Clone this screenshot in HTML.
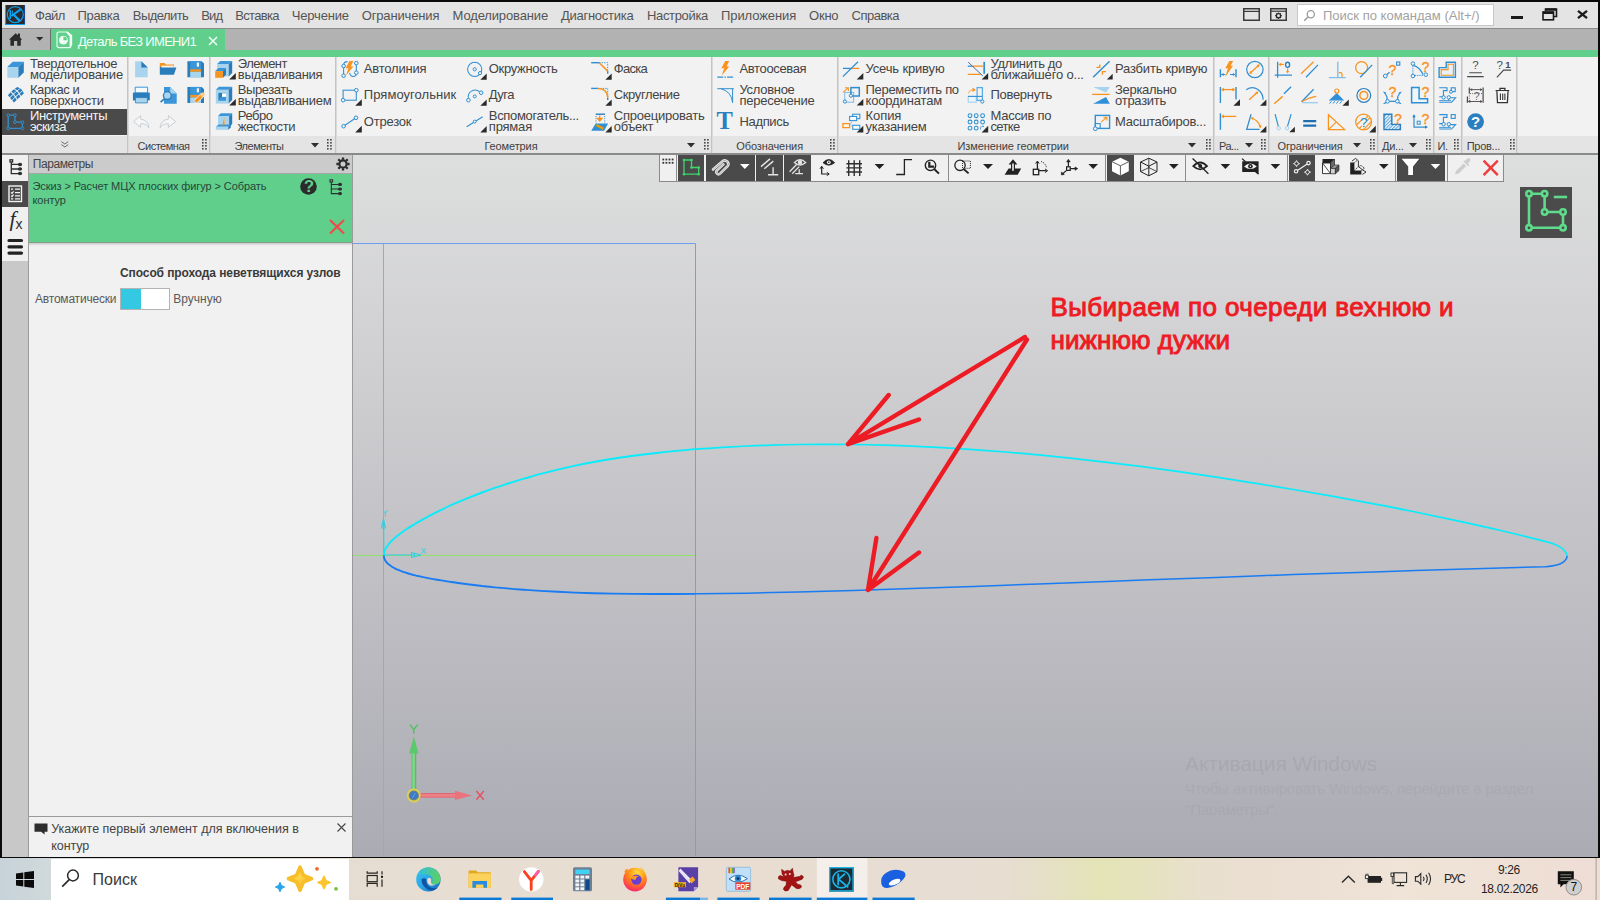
<!DOCTYPE html>
<html lang="ru"><head><meta charset="utf-8"><title>КОМПАС-3D</title><style>
html,body{margin:0;padding:0;width:1600px;height:900px;overflow:hidden;background:#f0f0f0;font-family:"Liberation Sans",sans-serif;}
.r{position:absolute;display:block;}
.t{position:absolute;white-space:pre;font-family:"Liberation Sans",sans-serif;}
svg{overflow:visible;}
</style></head><body>
<div class="r" style="left:0px;top:0px;width:1600px;height:858px;background:#0a0a0a;"></div>
<div class="r" style="left:2px;top:2px;width:1596px;height:26px;background:#e4e4e4;"></div>
<div class="r" style="left:2px;top:28px;width:1596px;height:1px;background:#8c8c8c;"></div>
<div class="r" style="left:2px;top:29px;width:1596px;height:21px;background:#b2b2b2;"></div>
<div class="r" style="left:2px;top:50px;width:1596px;height:6.5px;background:#5fcf8b;"></div>
<div class="r" style="left:51px;top:29px;width:174px;height:22px;background:#5fcf8b;"></div>
<svg class="r" style="left:5px;top:5px;" width="20" height="20" viewBox="0 0 20 20"><rect x="0" y="0" width="20" height="20" fill="#2c2a2a"/><path d="M0.5 0V19.5H20" fill="none" stroke="#0aa5f5" stroke-width="1.1"/><path d="M19.6 0V19" stroke="#1a4fb0" stroke-width="0.8"/><circle cx="10.3" cy="9.6" r="8" fill="none" stroke="#0a9fe8" stroke-width="1.2"/><path d="M5.3 5.2V13.8" stroke="#0aa5f5" stroke-width="1.5"/><path d="M6.4 11L15.6 4.4" stroke="#0aa5f5" stroke-width="2"/><path d="M9 10L15.3 16.4" stroke="#0aa5f5" stroke-width="2.3"/><path d="M7.6 5.6V10" stroke="#0aa5f5" stroke-width="0.9"/></svg>
<div class="t" style="left:35.1px;top:8.80px;font-size:13px;line-height:13px;color:#545454;letter-spacing:-0.592px;">Файл</div>
<div class="t" style="left:77.6px;top:8.80px;font-size:13px;line-height:13px;color:#545454;letter-spacing:-0.370px;">Правка</div>
<div class="t" style="left:132.8px;top:8.80px;font-size:13px;line-height:13px;color:#545454;letter-spacing:-0.561px;">Выделить</div>
<div class="t" style="left:201.3px;top:8.80px;font-size:13px;line-height:13px;color:#545454;letter-spacing:-0.844px;">Вид</div>
<div class="t" style="left:235.2px;top:8.80px;font-size:13px;line-height:13px;color:#545454;letter-spacing:-0.661px;">Вставка</div>
<div class="t" style="left:291.8px;top:8.80px;font-size:13px;line-height:13px;color:#545454;letter-spacing:-0.189px;">Черчение</div>
<div class="t" style="left:361.7px;top:8.80px;font-size:13px;line-height:13px;color:#545454;letter-spacing:-0.150px;">Ограничения</div>
<div class="t" style="left:452.6px;top:8.80px;font-size:13px;line-height:13px;color:#545454;letter-spacing:-0.145px;">Моделирование</div>
<div class="t" style="left:560.9px;top:8.80px;font-size:13px;line-height:13px;color:#545454;letter-spacing:-0.252px;">Диагностика</div>
<div class="t" style="left:647.0px;top:8.80px;font-size:13px;line-height:13px;color:#545454;letter-spacing:-0.344px;">Настройка</div>
<div class="t" style="left:721.1px;top:8.80px;font-size:13px;line-height:13px;color:#545454;letter-spacing:-0.106px;">Приложения</div>
<div class="t" style="left:809.0px;top:8.80px;font-size:13px;line-height:13px;color:#545454;letter-spacing:-0.205px;">Окно</div>
<div class="t" style="left:851.6px;top:8.80px;font-size:13px;line-height:13px;color:#545454;letter-spacing:-0.514px;">Справка</div>
<svg class="r" style="left:9.2px;top:33px;" width="14" height="13" viewBox="0 0 14 13"><path d="M0.4 6.2L6.6 0.2L8.8 2.3V0.6H11V4.4L12.8 6.2V6.8H11.8V12.8H8.2V8H5V12.8H1.4V6.8H0.4Z" fill="#2b2b2b"/></svg>
<svg class="r" style="left:36px;top:37.3px;" width="8" height="4" viewBox="0 0 8 4"><path d="M0 0H7.4L3.7 3.7Z" fill="#2b2b2b"/></svg>
<div class="r" style="left:50.2px;top:29px;width:1px;height:21px;background:#6e6e6e;"></div>
<svg class="r" style="left:56px;top:31px;" width="18" height="18" viewBox="0 0 18 18"><path d="M1 3Q1 1 3 1H11.4L15.6 4.6V13.6L14.2 16.6H3Q1 16.6 1 14.6Z" fill="none" stroke="#e6faee" stroke-width="1.2"/><path d="M11.4 1L15.9 4.6V14L13.6 16.8V5.4L10 1.4Z" fill="#f2fdf6"/><circle cx="7.4" cy="9.2" r="4.4" fill="#f2fdf6"/><path d="M7.4 9.2V5.6A3.6 3.6 0 0 1 11 9.2Z" fill="#5fcf8b"/></svg>
<div class="t" style="left:78.0px;top:35.30px;font-size:13px;line-height:13px;color:#f4fff8;letter-spacing:-0.694px;">Деталь БЕЗ ИМЕНИ1</div>
<svg class="r" style="left:208px;top:36px;" width="10" height="10" viewBox="0 0 10 10"><path d="M1 1L9 9M9 1L1 9" stroke="#f4fff8" stroke-width="1.5" fill="none"/></svg>
<svg class="r" style="left:1243px;top:8px;" width="17" height="13" viewBox="0 0 17 13"><rect x="0.75" y="0.75" width="15.5" height="11.5" fill="none" stroke="#3a3a3a" stroke-width="1.5"/><path d="M1 3.4H16" stroke="#3a3a3a" stroke-width="1.2"/></svg>
<svg class="r" style="left:1270px;top:8px;" width="17" height="13" viewBox="0 0 17 13"><rect x="0.75" y="0.75" width="15.5" height="11.5" fill="none" stroke="#3a3a3a" stroke-width="1.5"/><path d="M1 3.2H16" stroke="#3a3a3a" stroke-width="1.2"/><circle cx="8.5" cy="7.7" r="2.1" fill="none" stroke="#2a2a2a" stroke-width="1.3"/><path d="M8.5 4.4V5.6M8.5 9.8V11M5.2 7.7H6.4M10.6 7.7H11.8M6.2 5.4L7 6.2M10 9.2L10.8 10M10.8 5.4L10 6.2M7 9.2L6.2 10" stroke="#2a2a2a" stroke-width="1.3"/></svg>
<div class="r" style="left:1297px;top:4px;width:197px;height:22px;background:#ffffff;box-sizing:border-box;border:1px solid #c8c8c8;"></div>
<svg class="r" style="left:1303px;top:9px;" width="13" height="13" viewBox="0 0 13 13"><circle cx="7.8" cy="5.2" r="3.6" fill="none" stroke="#9a9a9a" stroke-width="1.3"/><path d="M5.2 7.8L1.2 11.8" stroke="#9a9a9a" stroke-width="1.5"/></svg>
<div class="t" style="left:1323.0px;top:8.80px;font-size:13px;line-height:13px;color:#a2a2a2;letter-spacing:0.007px;">Поиск по командам (Alt+/)</div>
<div class="r" style="left:1511px;top:15.5px;width:12px;height:3.2px;background:#1a1a1a;"></div>
<svg class="r" style="left:1542px;top:8px;" width="16" height="13" viewBox="0 0 16 13"><path d="M3.5 3V1H14.5V8.5H12" fill="none" stroke="#1a1a1a" stroke-width="1.6"/><path d="M3.5 1.6H14.5" stroke="#1a1a1a" stroke-width="2.4"/><rect x="1" y="4" width="10.5" height="7.8" fill="none" stroke="#1a1a1a" stroke-width="1.6"/><path d="M1 4.8H11.5" stroke="#1a1a1a" stroke-width="2.4"/></svg>
<svg class="r" style="left:1577px;top:10px;" width="11" height="9" viewBox="0 0 11 9"><path d="M1 0.8L10 8.2M10 0.8L1 8.2" stroke="#1a1a1a" stroke-width="2.3" fill="none"/></svg>
<div class="r" style="left:2px;top:56.5px;width:1596px;height:79px;background:#f2f2f2;"></div>
<div class="r" style="left:2px;top:135.5px;width:1596px;height:17.5px;background:#e4e4e4;"></div>
<div class="r" style="left:2px;top:153px;width:1596px;height:1.5px;background:#8a8a8a;"></div>
<div class="r" style="left:127px;top:57px;width:1px;height:96px;background:#c4c4c4;"></div>
<div class="r" style="left:128px;top:57px;width:1px;height:96px;background:#dadada;"></div>
<div class="r" style="left:209px;top:57px;width:1px;height:96px;background:#c4c4c4;"></div>
<div class="r" style="left:210px;top:57px;width:1px;height:96px;background:#dadada;"></div>
<div class="r" style="left:335px;top:57px;width:1px;height:96px;background:#c4c4c4;"></div>
<div class="r" style="left:336px;top:57px;width:1px;height:96px;background:#dadada;"></div>
<div class="r" style="left:711px;top:57px;width:1px;height:96px;background:#c4c4c4;"></div>
<div class="r" style="left:712px;top:57px;width:1px;height:96px;background:#dadada;"></div>
<div class="r" style="left:836.5px;top:57px;width:1px;height:96px;background:#c4c4c4;"></div>
<div class="r" style="left:837.5px;top:57px;width:1px;height:96px;background:#dadada;"></div>
<div class="r" style="left:1212.7px;top:57px;width:1px;height:96px;background:#c4c4c4;"></div>
<div class="r" style="left:1213.7px;top:57px;width:1px;height:96px;background:#dadada;"></div>
<div class="r" style="left:1268px;top:57px;width:1px;height:96px;background:#c4c4c4;"></div>
<div class="r" style="left:1269px;top:57px;width:1px;height:96px;background:#dadada;"></div>
<div class="r" style="left:1377.2px;top:57px;width:1px;height:96px;background:#c4c4c4;"></div>
<div class="r" style="left:1378.2px;top:57px;width:1px;height:96px;background:#dadada;"></div>
<div class="r" style="left:1432.8px;top:57px;width:1px;height:96px;background:#c4c4c4;"></div>
<div class="r" style="left:1433.8px;top:57px;width:1px;height:96px;background:#dadada;"></div>
<div class="r" style="left:1461.4px;top:57px;width:1px;height:96px;background:#c4c4c4;"></div>
<div class="r" style="left:1462.4px;top:57px;width:1px;height:96px;background:#dadada;"></div>
<div class="r" style="left:1516.3px;top:57px;width:1px;height:96px;background:#c4c4c4;"></div>
<div class="r" style="left:1517.3px;top:57px;width:1px;height:96px;background:#dadada;"></div>
<div class="r" style="left:2px;top:109px;width:125px;height:26px;background:#4a4a4a;"></div>
<div class="t" style="left:29.9px;top:56.60px;font-size:13px;line-height:13px;color:#444444;letter-spacing:-0.318px;">Твердотельное</div>
<div class="t" style="left:29.9px;top:67.60px;font-size:13px;line-height:13px;color:#444444;letter-spacing:-0.164px;">моделирование</div>
<div class="t" style="left:29.9px;top:82.80px;font-size:13px;line-height:13px;color:#444444;letter-spacing:-0.376px;">Каркас и</div>
<div class="t" style="left:29.9px;top:93.80px;font-size:13px;line-height:13px;color:#444444;letter-spacing:-0.188px;">поверхности</div>
<div class="t" style="left:29.9px;top:109.00px;font-size:13px;line-height:13px;color:#f4f4f4;letter-spacing:-0.342px;">Инструменты</div>
<div class="t" style="left:29.9px;top:120.00px;font-size:13px;line-height:13px;color:#f4f4f4;letter-spacing:-0.530px;">эскиза</div>
<svg class="r" style="left:60.6px;top:140.6px;" width="8" height="7" viewBox="0 0 8 7"><path d="M0.4 0.6L3.8 3L7.2 0.6M0.4 3.6L3.8 6L7.2 3.6" fill="none" stroke="#5a5a5a" stroke-width="0.9"/></svg>
<div class="t" style="left:137.6px;top:140.69px;font-size:11px;line-height:11px;color:#3e3e3e;letter-spacing:-0.494px;">Системная</div>
<svg class="r" style="left:201px;top:139px;" width="6" height="12" viewBox="0 0 6 12"><rect x="1.0" y="0" width="1.6" height="1.6" fill="#444"/><rect x="1.0" y="3" width="1.6" height="1.6" fill="#444"/><rect x="1.0" y="6" width="1.6" height="1.6" fill="#444"/><rect x="1.0" y="9" width="1.6" height="1.6" fill="#444"/><rect x="4.1" y="0" width="1.6" height="1.6" fill="#444"/><rect x="4.1" y="3" width="1.6" height="1.6" fill="#444"/><rect x="4.1" y="6" width="1.6" height="1.6" fill="#444"/><rect x="4.1" y="9" width="1.6" height="1.6" fill="#444"/></svg>
<div class="t" style="left:234.5px;top:140.69px;font-size:11px;line-height:11px;color:#3e3e3e;letter-spacing:-0.473px;">Элементы</div>
<svg class="r" style="left:311px;top:142.5px;" width="8" height="5" viewBox="0 0 8 5"><path d="M0 0H8L4 4.6Z" fill="#2e2e2e"/></svg>
<svg class="r" style="left:326px;top:139px;" width="6" height="12" viewBox="0 0 6 12"><rect x="1.0" y="0" width="1.6" height="1.6" fill="#444"/><rect x="1.0" y="3" width="1.6" height="1.6" fill="#444"/><rect x="1.0" y="6" width="1.6" height="1.6" fill="#444"/><rect x="1.0" y="9" width="1.6" height="1.6" fill="#444"/><rect x="4.1" y="0" width="1.6" height="1.6" fill="#444"/><rect x="4.1" y="3" width="1.6" height="1.6" fill="#444"/><rect x="4.1" y="6" width="1.6" height="1.6" fill="#444"/><rect x="4.1" y="9" width="1.6" height="1.6" fill="#444"/></svg>
<div class="t" style="left:484.5px;top:140.69px;font-size:11px;line-height:11px;color:#3e3e3e;letter-spacing:-0.115px;">Геометрия</div>
<svg class="r" style="left:686.5px;top:142.5px;" width="8" height="5" viewBox="0 0 8 5"><path d="M0 0H8L4 4.6Z" fill="#2e2e2e"/></svg>
<svg class="r" style="left:703px;top:139px;" width="6" height="12" viewBox="0 0 6 12"><rect x="1.0" y="0" width="1.6" height="1.6" fill="#444"/><rect x="1.0" y="3" width="1.6" height="1.6" fill="#444"/><rect x="1.0" y="6" width="1.6" height="1.6" fill="#444"/><rect x="1.0" y="9" width="1.6" height="1.6" fill="#444"/><rect x="4.1" y="0" width="1.6" height="1.6" fill="#444"/><rect x="4.1" y="3" width="1.6" height="1.6" fill="#444"/><rect x="4.1" y="6" width="1.6" height="1.6" fill="#444"/><rect x="4.1" y="9" width="1.6" height="1.6" fill="#444"/></svg>
<div class="t" style="left:736.3px;top:140.69px;font-size:11px;line-height:11px;color:#3e3e3e;letter-spacing:-0.107px;">Обозначения</div>
<svg class="r" style="left:829px;top:139px;" width="6" height="12" viewBox="0 0 6 12"><rect x="1.0" y="0" width="1.6" height="1.6" fill="#444"/><rect x="1.0" y="3" width="1.6" height="1.6" fill="#444"/><rect x="1.0" y="6" width="1.6" height="1.6" fill="#444"/><rect x="1.0" y="9" width="1.6" height="1.6" fill="#444"/><rect x="4.1" y="0" width="1.6" height="1.6" fill="#444"/><rect x="4.1" y="3" width="1.6" height="1.6" fill="#444"/><rect x="4.1" y="6" width="1.6" height="1.6" fill="#444"/><rect x="4.1" y="9" width="1.6" height="1.6" fill="#444"/></svg>
<div class="t" style="left:957.5px;top:140.69px;font-size:11px;line-height:11px;color:#3e3e3e;letter-spacing:-0.089px;">Изменение геометрии</div>
<svg class="r" style="left:1188px;top:142.5px;" width="8" height="5" viewBox="0 0 8 5"><path d="M0 0H8L4 4.6Z" fill="#2e2e2e"/></svg>
<svg class="r" style="left:1205px;top:139px;" width="6" height="12" viewBox="0 0 6 12"><rect x="1.0" y="0" width="1.6" height="1.6" fill="#444"/><rect x="1.0" y="3" width="1.6" height="1.6" fill="#444"/><rect x="1.0" y="6" width="1.6" height="1.6" fill="#444"/><rect x="1.0" y="9" width="1.6" height="1.6" fill="#444"/><rect x="4.1" y="0" width="1.6" height="1.6" fill="#444"/><rect x="4.1" y="3" width="1.6" height="1.6" fill="#444"/><rect x="4.1" y="6" width="1.6" height="1.6" fill="#444"/><rect x="4.1" y="9" width="1.6" height="1.6" fill="#444"/></svg>
<div class="t" style="left:1219.0px;top:140.69px;font-size:11px;line-height:11px;color:#3e3e3e;letter-spacing:-0.553px;">Ра...</div>
<svg class="r" style="left:1244.5px;top:142.5px;" width="8" height="5" viewBox="0 0 8 5"><path d="M0 0H8L4 4.6Z" fill="#2e2e2e"/></svg>
<svg class="r" style="left:1260px;top:139px;" width="6" height="12" viewBox="0 0 6 12"><rect x="1.0" y="0" width="1.6" height="1.6" fill="#444"/><rect x="1.0" y="3" width="1.6" height="1.6" fill="#444"/><rect x="1.0" y="6" width="1.6" height="1.6" fill="#444"/><rect x="1.0" y="9" width="1.6" height="1.6" fill="#444"/><rect x="4.1" y="0" width="1.6" height="1.6" fill="#444"/><rect x="4.1" y="3" width="1.6" height="1.6" fill="#444"/><rect x="4.1" y="6" width="1.6" height="1.6" fill="#444"/><rect x="4.1" y="9" width="1.6" height="1.6" fill="#444"/></svg>
<div class="t" style="left:1277.6px;top:140.69px;font-size:11px;line-height:11px;color:#3e3e3e;letter-spacing:-0.188px;">Ограничения</div>
<svg class="r" style="left:1353px;top:142.5px;" width="8" height="5" viewBox="0 0 8 5"><path d="M0 0H8L4 4.6Z" fill="#2e2e2e"/></svg>
<svg class="r" style="left:1369px;top:139px;" width="6" height="12" viewBox="0 0 6 12"><rect x="1.0" y="0" width="1.6" height="1.6" fill="#444"/><rect x="1.0" y="3" width="1.6" height="1.6" fill="#444"/><rect x="1.0" y="6" width="1.6" height="1.6" fill="#444"/><rect x="1.0" y="9" width="1.6" height="1.6" fill="#444"/><rect x="4.1" y="0" width="1.6" height="1.6" fill="#444"/><rect x="4.1" y="3" width="1.6" height="1.6" fill="#444"/><rect x="4.1" y="6" width="1.6" height="1.6" fill="#444"/><rect x="4.1" y="9" width="1.6" height="1.6" fill="#444"/></svg>
<div class="t" style="left:1382.0px;top:140.69px;font-size:11px;line-height:11px;color:#3e3e3e;letter-spacing:-0.253px;">Ди...</div>
<svg class="r" style="left:1408.5px;top:142.5px;" width="8" height="5" viewBox="0 0 8 5"><path d="M0 0H8L4 4.6Z" fill="#2e2e2e"/></svg>
<svg class="r" style="left:1425px;top:139px;" width="6" height="12" viewBox="0 0 6 12"><rect x="1.0" y="0" width="1.6" height="1.6" fill="#444"/><rect x="1.0" y="3" width="1.6" height="1.6" fill="#444"/><rect x="1.0" y="6" width="1.6" height="1.6" fill="#444"/><rect x="1.0" y="9" width="1.6" height="1.6" fill="#444"/><rect x="4.1" y="0" width="1.6" height="1.6" fill="#444"/><rect x="4.1" y="3" width="1.6" height="1.6" fill="#444"/><rect x="4.1" y="6" width="1.6" height="1.6" fill="#444"/><rect x="4.1" y="9" width="1.6" height="1.6" fill="#444"/></svg>
<div class="t" style="left:1437.5px;top:140.69px;font-size:11px;line-height:11px;color:#3e3e3e;letter-spacing:-0.484px;">И.</div>
<svg class="r" style="left:1452.5px;top:139px;" width="6" height="12" viewBox="0 0 6 12"><rect x="1.0" y="0" width="1.6" height="1.6" fill="#444"/><rect x="1.0" y="3" width="1.6" height="1.6" fill="#444"/><rect x="1.0" y="6" width="1.6" height="1.6" fill="#444"/><rect x="1.0" y="9" width="1.6" height="1.6" fill="#444"/><rect x="4.1" y="0" width="1.6" height="1.6" fill="#444"/><rect x="4.1" y="3" width="1.6" height="1.6" fill="#444"/><rect x="4.1" y="6" width="1.6" height="1.6" fill="#444"/><rect x="4.1" y="9" width="1.6" height="1.6" fill="#444"/></svg>
<div class="t" style="left:1466.7px;top:140.69px;font-size:11px;line-height:11px;color:#3e3e3e;letter-spacing:-0.265px;">Пров...</div>
<svg class="r" style="left:1508.5px;top:139px;" width="6" height="12" viewBox="0 0 6 12"><rect x="1.0" y="0" width="1.6" height="1.6" fill="#444"/><rect x="1.0" y="3" width="1.6" height="1.6" fill="#444"/><rect x="1.0" y="6" width="1.6" height="1.6" fill="#444"/><rect x="1.0" y="9" width="1.6" height="1.6" fill="#444"/><rect x="4.1" y="0" width="1.6" height="1.6" fill="#444"/><rect x="4.1" y="3" width="1.6" height="1.6" fill="#444"/><rect x="4.1" y="6" width="1.6" height="1.6" fill="#444"/><rect x="4.1" y="9" width="1.6" height="1.6" fill="#444"/></svg>
<div class="t" style="left:237.8px;top:56.60px;font-size:13px;line-height:13px;color:#444444;letter-spacing:-0.576px;">Элемент</div>
<div class="t" style="left:237.8px;top:67.60px;font-size:13px;line-height:13px;color:#444444;letter-spacing:-0.292px;">выдавливания</div>
<div class="t" style="left:237.8px;top:82.80px;font-size:13px;line-height:13px;color:#444444;letter-spacing:-0.454px;">Вырезать</div>
<div class="t" style="left:237.8px;top:93.80px;font-size:13px;line-height:13px;color:#444444;letter-spacing:-0.271px;">выдавливанием</div>
<div class="t" style="left:237.8px;top:109.00px;font-size:13px;line-height:13px;color:#444444;letter-spacing:-0.479px;">Ребро</div>
<div class="t" style="left:237.8px;top:120.00px;font-size:13px;line-height:13px;color:#444444;letter-spacing:-0.441px;">жесткости</div>
<div class="t" style="left:363.8px;top:62.20px;font-size:13px;line-height:13px;color:#444444;letter-spacing:-0.208px;">Автолиния</div>
<div class="t" style="left:363.8px;top:88.20px;font-size:13px;line-height:13px;color:#444444;letter-spacing:0.047px;">Прямоугольник</div>
<div class="t" style="left:363.8px;top:114.60px;font-size:13px;line-height:13px;color:#444444;letter-spacing:-0.212px;">Отрезок</div>
<div class="t" style="left:488.8px;top:62.20px;font-size:13px;line-height:13px;color:#444444;letter-spacing:-0.318px;">Окружность</div>
<div class="t" style="left:488.8px;top:88.20px;font-size:13px;line-height:13px;color:#444444;letter-spacing:-0.570px;">Дуга</div>
<div class="t" style="left:488.8px;top:109.00px;font-size:13px;line-height:13px;color:#444444;letter-spacing:-0.321px;">Вспомогатель...</div>
<div class="t" style="left:488.8px;top:120.00px;font-size:13px;line-height:13px;color:#444444;letter-spacing:-0.196px;">прямая</div>
<div class="t" style="left:613.8px;top:62.20px;font-size:13px;line-height:13px;color:#444444;letter-spacing:-0.726px;">Фаска</div>
<div class="t" style="left:613.8px;top:88.20px;font-size:13px;line-height:13px;color:#444444;letter-spacing:-0.391px;">Скругление</div>
<div class="t" style="left:613.8px;top:109.00px;font-size:13px;line-height:13px;color:#444444;letter-spacing:-0.232px;">Спроецировать</div>
<div class="t" style="left:613.8px;top:120.00px;font-size:13px;line-height:13px;color:#444444;letter-spacing:-0.365px;">объект</div>
<div class="t" style="left:739.5px;top:62.20px;font-size:13px;line-height:13px;color:#444444;letter-spacing:-0.353px;">Автоосевая</div>
<div class="t" style="left:739.5px;top:83.20px;font-size:13px;line-height:13px;color:#444444;letter-spacing:-0.301px;">Условное</div>
<div class="t" style="left:739.5px;top:94.00px;font-size:13px;line-height:13px;color:#444444;letter-spacing:-0.246px;">пересечение</div>
<div class="t" style="left:739.5px;top:114.60px;font-size:13px;line-height:13px;color:#444444;letter-spacing:-0.354px;">Надпись</div>
<div class="t" style="left:865.5px;top:62.20px;font-size:13px;line-height:13px;color:#444444;letter-spacing:-0.159px;">Усечь кривую</div>
<div class="t" style="left:865.5px;top:83.20px;font-size:13px;line-height:13px;color:#444444;letter-spacing:-0.302px;">Переместить по</div>
<div class="t" style="left:865.5px;top:94.00px;font-size:13px;line-height:13px;color:#444444;letter-spacing:-0.152px;">координатам</div>
<div class="t" style="left:865.5px;top:109.00px;font-size:13px;line-height:13px;color:#444444;letter-spacing:-0.071px;">Копия</div>
<div class="t" style="left:865.5px;top:120.00px;font-size:13px;line-height:13px;color:#444444;letter-spacing:-0.284px;">указанием</div>
<div class="t" style="left:990.5px;top:56.60px;font-size:13px;line-height:13px;color:#444444;letter-spacing:-0.344px;">Удлинить до</div>
<div class="t" style="left:990.5px;top:67.90px;font-size:13px;line-height:13px;color:#444444;letter-spacing:-0.175px;">ближайшего о...</div>
<div class="t" style="left:990.5px;top:88.20px;font-size:13px;line-height:13px;color:#444444;letter-spacing:-0.300px;">Повернуть</div>
<div class="t" style="left:990.5px;top:109.00px;font-size:13px;line-height:13px;color:#444444;letter-spacing:-0.274px;">Массив по</div>
<div class="t" style="left:990.5px;top:120.00px;font-size:13px;line-height:13px;color:#444444;letter-spacing:-0.666px;">сетке</div>
<div class="t" style="left:1115.1px;top:62.20px;font-size:13px;line-height:13px;color:#444444;letter-spacing:-0.210px;">Разбить кривую</div>
<div class="t" style="left:1115.1px;top:83.20px;font-size:13px;line-height:13px;color:#444444;letter-spacing:-0.322px;">Зеркально</div>
<div class="t" style="left:1115.1px;top:94.00px;font-size:13px;line-height:13px;color:#444444;letter-spacing:-0.284px;">отразить</div>
<div class="t" style="left:1115.1px;top:114.60px;font-size:13px;line-height:13px;color:#444444;letter-spacing:-0.300px;">Масштабиров...</div>
<div class="t" style="left:716.6px;top:109.26px;font-size:24.5px;line-height:24.5px;color:#2a7fc0;font-weight:bold;font-family:'Liberation Serif',serif;">T</div>
<svg class="r" style="left:0px;top:0px;" width="1600" height="900" viewBox="0 0 1600 900"><path d="M7.3 67.1L18.4 67.1L18.4 77.8L7.3 77.8Z" fill="#a8d4ee" /><path d="M7.3 67.1L12.7 61.8L23.8 61.8L18.4 67.1Z" fill="#3a96d8" /><path d="M18.4 67.1L23.8 61.8L23.8 72.4L18.4 77.8Z" fill="#2a7dbb" /><path d="M7.9 95.3L10.6 92.3L12.6 94.3L9.6 97.3Z" fill="#2a7dbb" /><path d="M10.1 97.9L13.1 94.8L14.8 97.0L11.8 99.9Z" fill="#2a7dbb" /><path d="M12.3 100.5L15.2 97.6L16.7 100.0L13.9 102.6Z" fill="#2a7dbb" /><path d="M11.3 91.5L14.0 89.2L16.3 90.9L13.4 93.5Z" fill="#2a7dbb" /><path d="M13.9 94.1L16.8 91.5L18.6 93.6L15.6 96.3Z" fill="#2a7dbb" /><path d="M16.0 96.9L19.0 94.2L20.3 96.8L17.5 99.3Z" fill="#2a7dbb" /><path d="M14.7 88.7L17.4 87.0L20.0 88.2L17.1 90.3Z" fill="#2a7dbb" /><path d="M17.6 90.8L20.6 88.6L22.4 90.5L19.4 92.9Z" fill="#2a7dbb" /><path d="M19.8 93.6L22.8 91.1L23.8 93.6L21.0 96.1Z" fill="#2a7dbb" /><g fill="none" stroke="#2f8fd2" stroke-width="1.3"><path d="M8.2 115.2H14.9V122.2H22.4V128.4H8.2Z"/></g><g fill="#4a4a4a" stroke="#2f8fd2" stroke-width="1"><circle cx="8.2" cy="115.2" r="1.4"/><circle cx="14.9" cy="115.2" r="1.4"/><circle cx="14.9" cy="122.2" r="1.4"/><circle cx="22.4" cy="122.2" r="1.4"/><circle cx="22.4" cy="128.4" r="1.4"/><circle cx="8.2" cy="128.4" r="1.4"/></g><path d="M135.1 61.2L141.4 61.2L147.7 67.6L147.7 77.3L135.1 77.3Z" fill="#a8d4ee" /><path d="M141.4 61.2L147.7 67.6L141.4 67.6Z" fill="#2a7dbb" /><path d="M159.8 63.0L164.5 63.0L166.0 64.6L174.0 64.6L174.0 67.0L159.8 67.0Z" fill="#f7931e" /><path d="M161.6 65.6L173.6 65.6L173.6 68.0L161.6 68.0Z" fill="#fdf3e6" /><path d="M159.8 74.8L159.8 66.4L161.8 67.6L176.4 67.6L173.9 74.8Z" fill="#2a7dbb" /><path d="M187.4 61.2L201.7 61.2L204.0 63.5L204.0 77.3L187.4 77.3Z" fill="#2a7dbb" /><path d="M190.2 61.2L201.0 61.2L201.0 69.2L190.2 69.2Z" fill="#3a96d8" /><path d="M196.8 62.6L199.0 62.6L199.0 66.6L196.8 66.6Z" fill="#eef6fc" /><path d="M190.2 69.2L201.0 69.2L201.0 71.8L190.2 71.8Z" fill="#f7931e" /><path d="M190.2 71.8L201.0 71.8L201.0 77.3L190.2 77.3Z" fill="#a8d4ee" /><path d="M135.2 87.2L147.6 87.2L147.6 93.0L135.2 93.0Z" fill="#f4fafe" stroke="#3a96d8" stroke-width="1"/><path d="M132.9 92.6L149.8 92.6L149.8 100.4L132.9 100.4Z" fill="#2a7dbb" /><path d="M135.4 97.6L147.4 97.6L147.4 102.9L135.4 102.9Z" fill="#a8d4ee" stroke="#2a7dbb" stroke-width="0.8"/><path d="M164.0 86.9L170.2 86.9L176.7 93.4L176.7 103.8L164.0 103.8Z" fill="#3a96d8" /><path d="M170.2 86.9L176.7 93.4L170.2 93.4Z" fill="#a8d4ee" /><circle cx="167.3" cy="95.6" r="3.9" fill="#a8d4ee" stroke="#2a7dbb" stroke-width="1.3"/><path d="M164.6 98.6L160.6 102.2" stroke="#2a7dbb" stroke-width="1.6"/><path d="M187.4 86.9L201.7 86.9L204.0 89.2L204.0 103.0L187.4 103.0Z" fill="#2a7dbb" /><path d="M190.2 86.9L201.0 86.9L201.0 94.9L190.2 94.9Z" fill="#3a96d8" /><path d="M196.8 88.3L199.0 88.3L199.0 92.3L196.8 92.3Z" fill="#eef6fc" /><path d="M190.2 94.9L201.0 94.9L201.0 97.5L190.2 97.5Z" fill="#f7931e" /><path d="M190.2 97.5L201.0 97.5L201.0 103.0L190.2 103.0Z" fill="#a8d4ee" /><path d="M196.6 100.6L202.4 95" stroke="#fbe3c4" stroke-width="4.6" stroke-linecap="round"/><path d="M196.4 100.8L202 95.4" stroke="#f7931e" stroke-width="3" stroke-linecap="round"/><path d="M202 95.4L203.2 94.2" stroke="#fbc98a" stroke-width="3" stroke-linecap="round"/><g fill="#f6f6f6" stroke="#c9cfd4" stroke-width="1"><path d="M140.6 115.6L133.6 121.6L140.6 127.4V123.8Q146.6 123.4 149 128.2Q148.4 119.8 140.6 119.2Z"/><path d="M168.4 115.6L175.6 121.6L168.4 127.4V123.8Q162.4 123.4 160 128.2Q160.6 119.8 168.4 119.2Z"/></g><path d="M217.1 64.0L228.7 64.0L228.7 76.4L217.1 76.4Z" fill="#a8d4ee" /><path d="M217.1 64.0L220.2 60.9L232.2 60.9L228.7 64.0Z" fill="#3a96d8" /><path d="M228.7 64.0L232.2 60.9L232.2 72.9L228.7 76.4Z" fill="#2a7dbb" /><path d="M215.2 71.1L218.5 68.0L226.0 68.0L222.9 71.1Z" fill="#3a96d8" /><path d="M222.9 71.1L226.0 68.0L226.0 74.7L222.9 77.8Z" fill="#2a7dbb" /><path d="M215.2 71.1L222.9 71.1L222.9 77.8L215.2 77.8Z" fill="#f7931e" /><path d="M235.8 73.0V79.6H229.20000000000002Z" fill="#2a2a2a"/><path d="M215.8 89.8L228.7 89.8L228.7 103.6L215.8 103.6Z" fill="#a8d4ee" /><path d="M215.8 89.8L218.9 86.7L232.2 86.7L228.7 89.8Z" fill="#3a96d8" /><path d="M228.7 89.8L232.2 86.7L232.2 100.0L228.7 103.6Z" fill="#2a7dbb" /><path d="M218.4 92.9L226.0 92.9L226.0 100.4L218.4 100.4Z" fill="#2a7dbb" /><path d="M222.0 93.3L226.0 93.3L226.0 96.9L222.0 96.9Z" fill="#ffffff" /><path d="M220.6 96.9L226.0 96.9L226.0 100.4L218.4 100.4Z" fill="#3a96d8" /><path d="M235.8 99.0V105.6H229.20000000000002Z" fill="#2a2a2a"/><path d="M218.0 116.0L229.1 116.0L229.1 126.6L218.0 126.6Z" fill="#a8d4ee" /><path d="M218.0 116.0L220.7 113.3L232.2 113.3L229.1 116.0Z" fill="#3a96d8" /><path d="M229.1 116.0L232.2 113.3L232.2 124.0L229.1 127.0Z" fill="#2a7dbb" /><path d="M215.8 126.7L218.6 124.4L230.6 124.4L228.2 126.7Z" fill="#3a96d8" /><path d="M215.8 126.7L228.2 126.7L228.2 129.8L215.8 129.8Z" fill="#a8d4ee" /><path d="M228.2 126.7L230.8 124.4L230.8 127.4L228.2 129.8Z" fill="#2a7dbb" /><path d="M224.2 117.3L222.4 125.4L224.7 124.4Z" fill="#f7931e" /><path d="M224.2 117.3L224.7 124.4L225.6 124.0Z" fill="#f5c38a" /><g fill="none" stroke="#2f8fd2" stroke-width="1.05"><path d="M343.6 66V75.7M356.3 63.1V72.7M343.6 64.5Q344 61.6 347.6 61.6M349.6 72.8Q350.4 76.4 353.2 76.4Q356 76.4 356.3 74.4"/></g><path d="M349.4 60.9L353.4 60.9L350.8 66.4L353.4 66.4L346.0 75.5L348.4 68.3L345.6 68.3Z" fill="#f7931e" /><circle cx="343.6" cy="66" r="1.8" fill="#f2f2f2" stroke="#2f8fd2" stroke-width="1"/><circle cx="343.6" cy="75.7" r="1.8" fill="#f2f2f2" stroke="#2f8fd2" stroke-width="1"/><circle cx="356.3" cy="63.1" r="1.8" fill="#f2f2f2" stroke="#2f8fd2" stroke-width="1"/><circle cx="356.3" cy="72.7" r="1.8" fill="#f2f2f2" stroke="#2f8fd2" stroke-width="1"/><rect x="343.1" y="90.2" width="13.2" height="10" fill="none" stroke="#2f8fd2" stroke-width="1.05"/><circle cx="356.3" cy="90.2" r="1.8" fill="#f2f2f2" stroke="#2f8fd2" stroke-width="1"/><circle cx="343.1" cy="100.2" r="1.8" fill="#f2f2f2" stroke="#2f8fd2" stroke-width="1"/><path d="M361.8 99.2V105.8H355.2Z" fill="#2a2a2a"/><path d="M343.6 126.2L356 117.8" stroke="#2f8fd2" stroke-width="1.05"/><circle cx="343.6" cy="126.2" r="1.8" fill="#f2f2f2" stroke="#2f8fd2" stroke-width="1"/><circle cx="356" cy="117.8" r="1.8" fill="#f2f2f2" stroke="#2f8fd2" stroke-width="1"/><path d="M361.8 125.80000000000001V132.4H355.2Z" fill="#2a2a2a"/><circle cx="474.7" cy="69.3" r="7.1" fill="none" stroke="#2f8fd2" stroke-width="1.05"/><circle cx="474.7" cy="69.3" r="1.6" fill="#f2f2f2" stroke="#2f8fd2" stroke-width="1"/><circle cx="480" cy="73.1" r="1.6" fill="#f2f2f2" stroke="#2f8fd2" stroke-width="1"/><path d="M486.7 73.39999999999999V79.8H480.3Z" fill="#2a2a2a"/><path d="M468.4 98.6A7 7 0 0 1 479.6 91.6" fill="none" stroke="#2f8fd2" stroke-width="1.05"/><circle cx="468.4" cy="100.2" r="1.8" fill="#f2f2f2" stroke="#2f8fd2" stroke-width="1"/><circle cx="481.1" cy="92.7" r="1.8" fill="#f2f2f2" stroke="#2f8fd2" stroke-width="1"/><circle cx="474.7" cy="96.4" r="1.5" fill="#f2f2f2" stroke="#2f8fd2" stroke-width="1"/><path d="M486.7 99.39999999999999V105.8H480.3Z" fill="#2a2a2a"/><path d="M466.7 126.8L482.7 116.7" stroke="#2f8fd2" stroke-width="1.05"/><circle cx="474.7" cy="121.6" r="1.5" fill="#f2f2f2" stroke="#2f8fd2" stroke-width="1"/><path d="M486.7 126.0V132.4H480.3Z" fill="#2a2a2a"/><path d="M591.2 62.7H599.2" stroke="#2f8fd2" stroke-width="1.4"/><path d="M599.2 62.7H607.7V71.1" fill="none" stroke="#2f8fd2" stroke-width="1" stroke-dasharray="1.2 1.3"/><path d="M607.7 71.1V73.8" stroke="#2f8fd2" stroke-width="1.4"/><path d="M599.2 62.7L607.7 71.1" stroke="#f7931e" stroke-width="1.5"/><path d="M611.7 73.39999999999999V79.8H605.3000000000001Z" fill="#2a2a2a"/><path d="M591.2 88.4H597.9" stroke="#2f8fd2" stroke-width="1.4"/><path d="M597.9 88.4H607.7V97.8" fill="none" stroke="#2f8fd2" stroke-width="1" stroke-dasharray="1.2 1.3"/><path d="M607.7 97.8V100" stroke="#2f8fd2" stroke-width="1.4"/><path d="M597.9 88.4Q607.7 88.6 607.7 97.8" fill="none" stroke="#f7931e" stroke-width="1.5"/><path d="M611.7 99.39999999999999V105.8H605.3000000000001Z" fill="#2a2a2a"/><path d="M591.2 130.7L604.1 130.7L608.1 123.6L595.7 123.6Z" fill="#2f8fd8" /><path d="M596.4 125L603.6 128.8" stroke="#5aa84a" stroke-width="3"/><path d="M596.6 125.1L603.4 128.7" stroke="#f7931e" stroke-width="2"/><path d="M595.7 114.2H605" stroke="#2a7dbb" stroke-width="1.4"/><path d="M596 116V123M604.7 116V123" stroke="#2f8fd2" stroke-width="1" stroke-dasharray="1 1.2"/><path d="M599.7 115.6V119.2M597.4 118.4L599.7 121L602 118.4Z" stroke="#f7931e" stroke-width="1.3" fill="#f7931e"/><path d="M611.7 126.0V132.4H605.3000000000001Z" fill="#2a2a2a"/><path d="M725.2 60.9L729.2 60.9L726.6 66.4L729.2 66.4L721.8 75.5L724.2 68.3L721.4 68.3Z" fill="#f7931e" /><path d="M717.3 77.2H733.8" stroke="#2f8fd2" stroke-width="1.3" stroke-dasharray="6 1.2 1.4 1.2"/><path d="M717.3 88.7H733.8M732.6 88.7V102.7M720.9 88.7Q731.6 91.6 732.6 102.7" fill="none" stroke="#2f8fd2" stroke-width="1"/><path d="M842.9 68.4H850.9" stroke="#2f8fd2" stroke-width="1.3"/><path d="M850.9 68.4H859.3" stroke="#f7931e" stroke-width="1.3"/><path d="M842.9 76.6L858 61.8" stroke="#2f8fd2" stroke-width="1.3"/><path d="M863.3 73.0V79.6H856.6999999999999Z" fill="#2a2a2a"/><rect x="844.7" y="92.4" width="8.9" height="9.8" fill="none" stroke="#7fbfe8" stroke-width="1.05"/><rect x="850.9" y="87.6" width="8.4" height="8.4" fill="none" stroke="#2f8fd2" stroke-width="1.5"/><circle cx="850.9" cy="95.7" r="1.6" fill="#f2f2f2" stroke="#2f8fd2" stroke-width="1"/><circle cx="844.9" cy="101.5" r="1.6" fill="#f2f2f2" stroke="#2f8fd2" stroke-width="1"/><path d="M842.9 92.4L847.6 88.4M845 87.8H848.4V91" fill="none" stroke="#f7931e" stroke-width="1.05"/><path d="M863.3 99.0V105.6H856.6999999999999Z" fill="#2a2a2a"/><g fill="#f6fbff" stroke="#2f8fd2" stroke-width="1.05"><rect x="852.7" y="114.2" width="7.1" height="4.5"/><rect x="849.6" y="116.4" width="7.1" height="4.2"/><rect x="852.7" y="125.3" width="7.1" height="4"/></g><rect x="842.9" y="123.6" width="6.7" height="4" fill="#fff7ec" stroke="#f7931e" stroke-width="1.3"/><path d="M852.2 120.8L850.4 124.4L852.6 127" fill="none" stroke="#8fb6ea" stroke-width="0.8"/><path d="M863.3 125.80000000000001V132.4H856.6999999999999Z" fill="#2a2a2a"/><path d="M984.2 61.8V73.8" stroke="#2f8fd2" stroke-width="1.7"/><path d="M967.8 66.2H971.8" stroke="#2f8fd2" stroke-width="1.3"/><path d="M971.8 66.2H983.3M967.8 74.4H980.7" stroke="#f7931e" stroke-width="1.3"/><path d="M968.2 62.2L982.9 76" stroke="#2a5fae" stroke-width="0.9"/><path d="M988.2 73.0V79.6H981.6Z" fill="#2a2a2a"/><rect x="968.2" y="96.4" width="8" height="5.8" fill="#eaf5fd" stroke="#9fd0f0" stroke-width="1.05"/><rect x="977.1" y="87.6" width="5.3" height="12.8" fill="none" stroke="#5aaee8" stroke-width="1.3"/><path d="M968 96.4H982.4" stroke="#2f8fd2" stroke-width="1.05"/><circle cx="982.3" cy="101.5" r="1.6" fill="#f2f2f2" stroke="#2f8fd2" stroke-width="1"/><path d="M968.4 93.4Q969.6 89.6 974 89.8" fill="none" stroke="#f9b45e" stroke-width="1.05"/><path d="M972.6 87.6L976 90L972.4 92Z" fill="#f7931e"/><circle cx="970" cy="115.7" r="1.9" fill="none" stroke="#2f8fd2" stroke-width="1.05"/><circle cx="970" cy="122" r="1.9" fill="none" stroke="#2f8fd2" stroke-width="1.05"/><circle cx="970" cy="128.2" r="1.9" fill="none" stroke="#2f8fd2" stroke-width="1.05"/><circle cx="976.2" cy="115.7" r="1.9" fill="none" stroke="#2f8fd2" stroke-width="1.05"/><circle cx="976.2" cy="122" r="1.9" fill="none" stroke="#2f8fd2" stroke-width="1.05"/><circle cx="976.2" cy="128.2" r="1.9" fill="none" stroke="#2f8fd2" stroke-width="1.05"/><circle cx="982.6" cy="115.7" r="1.9" fill="none" stroke="#2f8fd2" stroke-width="1.05"/><circle cx="982.6" cy="122" r="1.9" fill="none" stroke="#2f8fd2" stroke-width="1.05"/><circle cx="982.6" cy="128.2" r="1.9" fill="none" stroke="#2f8fd2" stroke-width="1.05"/><rect x="981" y="126" width="8" height="7" fill="#f2f2f2"/><path d="M981.4 127A1.9 1.9 0 0 1 984 126.6" fill="none" stroke="#2f8fd2" stroke-width="1"/><path d="M988.2 125.80000000000001V132.4H981.6Z" fill="#2a2a2a"/><path d="M1093.1 77.3L1109.6 61.3" stroke="#2f8fd2" stroke-width="1.5"/><path d="M1096.5 67.4H1099.8V64.4M1102.4 74.7V71.6H1106" fill="none" stroke="#f7931e" stroke-width="1.3"/><path d="M1112.7 73.8V79.6H1106.9Z" fill="#2a2a2a"/><path d="M1093.1 86.9L1109.8 86.9L1106.0 92.4Z" fill="#a8d4ee" /><path d="M1092.2 94.4H1109.6" stroke="#f7931e" stroke-width="1.3"/><path d="M1093.1 103.8L1109.8 103.8L1106.0 96.9Z" fill="#2f8fd8" /><rect x="1095.3" y="115.4" width="14.3" height="13" fill="none" stroke="#2f8fd2" stroke-width="1.4"/><rect x="1095.3" y="123.6" width="4.9" height="4.8" fill="none" stroke="#2f8fd2" stroke-width="1.05"/><circle cx="1095.3" cy="128.7" r="1.9" fill="#f2f2f2" stroke="#2f8fd2" stroke-width="1"/><path d="M1101.1 122.2L1106.4 117.6M1103.4 117.2H1106.9V120.6" fill="none" stroke="#f7931e" stroke-width="1.1"/><path d="M1220.4 69.3V77.3M1236 69.3V77.3" stroke="#2f8fd2" stroke-width="1.4"/><path d="M1221.4 74.5H1225.4M1230 74.5H1235" stroke="#2f8fd2" stroke-width="1.1"/><path d="M1221.0 74.5L1223.6 72.9L1223.6 76.1Z" fill="#2f8fd2" /><path d="M1235.4 74.5L1232.8 76.1L1232.8 72.9Z" fill="#2f8fd2" /><path d="M1229.4 60.9L1233.2 60.9L1230.6 65.8L1233.0 65.8L1225.3 76.9L1227.9 68.2L1225.3 68.2Z" fill="#f7931e" /><circle cx="1254.9" cy="69.5" r="8.2" fill="none" stroke="#2f8fd2" stroke-width="1.2"/><path d="M1250 73.2L1259 65" stroke="#f7931e" stroke-width="1.3"/><path d="M1249.3 73.8L1250.2 70.7L1252.5 73.2Z" fill="#f7931e" /><path d="M1259.8 64.3L1258.9 67.4L1256.6 64.9Z" fill="#f7931e" /><path d="M1220.4 86.9V102.9M1236 86.9V99.6" stroke="#2f8fd2" stroke-width="1.4"/><path d="M1222 89.6H1234.4" stroke="#f7931e" stroke-width="1.3"/><path d="M1221.0 89.6L1224.0 87.8L1224.0 91.4Z" fill="#f7931e" /><path d="M1235.4 89.6L1232.4 91.4L1232.4 87.8Z" fill="#f7931e" /><path d="M1240 99.2V105.8H1233.4Z" fill="#2a2a2a"/><path d="M1246.2 89.8Q1252 85.6 1258 89.4Q1263 93 1263.1 99.8" fill="none" stroke="#2f8fd2" stroke-width="1.2"/><path d="M1249.2 99.7L1257.4 92.2" stroke="#f7931e" stroke-width="1.4"/><path d="M1258.4 91.4L1257.5 94.5L1255.2 92.0Z" fill="#f7931e" /><path d="M1266.4 99.39999999999999V105.8H1260.0Z" fill="#2a2a2a"/><path d="M1220.4 113.3V129.8" stroke="#2f8fd2" stroke-width="1.4"/><path d="M1222 116.4H1236.2" stroke="#f7931e" stroke-width="1.3"/><path d="M1221.0 116.4L1224.0 114.6L1224.0 118.2Z" fill="#f7931e" /><path d="M1251.1 114.2L1246.7 129.3H1259.6" fill="none" stroke="#2f8fd2" stroke-width="1.3"/><path d="M1251.4 118Q1258.4 120 1260.4 127.2" fill="none" stroke="#f7931e" stroke-width="1.3"/><path d="M1250.6 117.7L1253.6 116.9L1252.6 120.0Z" fill="#f7931e" /><path d="M1260.7 128.2L1258.5 126.1L1261.6 125.3Z" fill="#f7931e" /><path d="M1266.4 126.0V132.4H1260.0Z" fill="#2a2a2a"/><path d="M1277.6 61.8V77.8M1274.7 75.1H1292" stroke="#2f8fd2" stroke-width="1.3"/><path d="M1279.6 64.4H1284" stroke="#f7931e" stroke-width="1.2"/><path d="M1278.3 64.4L1281.1 62.8L1281.1 66.0Z" fill="#f7931e" /><ellipse cx="1287.6" cy="64.8" rx="2" ry="2.6" fill="none" stroke="#2a7fc0" stroke-width="1.4"/><path d="M1287.6 68.6V72" stroke="#f7931e" stroke-width="1.2"/><path d="M1287.6 73.6L1286.0 71.0L1289.2 71.0Z" fill="#f7931e" /><path d="M1274.2 103.8L1282.7 96.4" stroke="#f7931e" stroke-width="1.4"/><path d="M1284 93.8L1291.1 86.7" stroke="#2f8fd2" stroke-width="1.4"/><path d="M1275.1 114.2L1278.4 126.6M1291.1 114.2L1287.4 126.6" stroke="#2f8fd2" stroke-width="1.2"/><circle cx="1278.7" cy="128.2" r="1.7" fill="#f2f2f2" stroke="#9fd0f0" stroke-width="1"/><circle cx="1287.1" cy="128.2" r="1.7" fill="#f2f2f2" stroke="#9fd0f0" stroke-width="1"/><path d="M1294.9 126.70000000000002V132.3H1289.3000000000002Z" fill="#2a2a2a"/><path d="M1301.1 73.8L1313.6 61.8" stroke="#f7931e" stroke-width="1.3"/><path d="M1306 77.3L1318 64.9" stroke="#2f8fd2" stroke-width="1.3"/><path d="M1302.4 102.7H1318" stroke="#9fd0f0" stroke-width="1.4"/><path d="M1301.6 101.8L1313.6 89.3" stroke="#2f8fd2" stroke-width="1.3"/><path d="M1301.6 101.8Q1310 97.4 1316.2 96.4" fill="none" stroke="#f7931e" stroke-width="1.2"/><path d="M1303.2 121.1H1316.2M1303.2 125.6H1316.2" stroke="#1f6fb0" stroke-width="2.4"/><path d="M1337.8 61.8V77.3M1328.9 77.6H1345.8" stroke="#7fc0ea" stroke-width="1.4"/><path d="M1338.8 72.6H1340.6Q1342 72.6 1342 74V77" fill="none" stroke="#f7931e" stroke-width="1.2"/><path d="M1336.8 93.1L1328.7 100.4L1344.2 100.4Z" fill="#2f8fd8" /><circle cx="1336.8" cy="91" r="2" fill="#f2f2f2" stroke="#f7931e" stroke-width="1.2"/><path d="M1329.6 103.6L1331.4 101.2M1333 103.6L1334.8 101.2M1336.4 103.6L1338.2 101.2M1339.8 103.6L1341.6 101.2" stroke="#2f8fd2" stroke-width="1"/><path d="M1348.8 99.39999999999999V105.8H1342.3999999999999Z" fill="#2a2a2a"/><path d="M1328.4 114.7V129.6H1344.7Z" fill="none" stroke="#f7931e" stroke-width="1.2"/><path d="M1329 129L1336.2 122.2" stroke="#f7931e" stroke-width="1.1"/><circle cx="1361.6" cy="67.6" r="6" fill="none" stroke="#f7931e" stroke-width="1.3"/><path d="M1360.2 77.3L1372.2 64.9" stroke="#2f8fd2" stroke-width="1.3"/><circle cx="1363.8" cy="95.4" r="6.9" fill="none" stroke="#2a7fc0" stroke-width="1.2"/><circle cx="1363.8" cy="95.4" r="3.9" fill="none" stroke="#f7931e" stroke-width="1.5"/><circle cx="1363.6" cy="122" r="7.9" fill="none" stroke="#f7931e" stroke-width="1.3"/><defs><clipPath id="hc"><circle cx="1363.6" cy="122" r="7.6"/></clipPath></defs><g clip-path="url(#hc)"><path d="M1355 126.6L1361.4 120.2M1357.6 130L1361.8 125.8M1366.4 121.2L1372 115.6M1361 132L1372 121M1366 118L1371 113" stroke="#f7931e" stroke-width="1.1"/></g><text x="1363.8" y="126.6" font-family="Liberation Sans" font-size="13" font-weight="normal" fill="#2a7fc0" text-anchor="middle">?</text><path d="M1375.8 125.80000000000001V132.4H1369.2Z" fill="#2a2a2a"/><path d="M1386.6 74.8L1389.6 72.2" stroke="#2f8fd2" stroke-width="1.3"/><circle cx="1385.3" cy="76" r="1.9" fill="#f2f2f2" stroke="#2f8fd2" stroke-width="1"/><rect x="1396.6" y="62" width="3.2" height="3.2" fill="#f2f2f2" stroke="#2f8fd2" stroke-width="1.1"/><text x="1392.4" y="75" font-family="Liberation Sans" font-size="14" fill="#f7931e" stroke="#f7931e" stroke-width="0.35" text-anchor="middle">?</text><circle cx="1412.9" cy="63.6" r="1.8" fill="#f2f2f2" stroke="#2f8fd2" stroke-width="1"/><circle cx="1412.9" cy="76" r="1.8" fill="#f2f2f2" stroke="#2f8fd2" stroke-width="1"/><circle cx="1425.8" cy="74.7" r="1.8" fill="#f2f2f2" stroke="#2f8fd2" stroke-width="1"/><path d="M1413.6 65.4Q1420 67.6 1423 74.6" fill="none" stroke="#2f8fd2" stroke-width="1.3"/><path d="M1412.9 66V74M1415 75.4H1423.6" stroke="#2f8fd2" stroke-width="1" stroke-dasharray="1.2 1"/><text x="1425.5" y="71.6" font-family="Liberation Sans" font-size="14" fill="#f7931e" stroke="#f7931e" stroke-width="0.35" text-anchor="middle">?</text><g fill="none" stroke="#2f8fd2" stroke-width="1.2"><path d="M1389.4 101.3H1395.6M1384.2 92.4Q1388.2 97 1386.6 100M1400.6 92.4Q1396.4 97 1398.2 100M1383.6 103.8L1386.4 102.4M1401 103.8L1398.4 102.4"/><path d="M1383.4 92L1386 93M1401.4 92L1398.8 93" stroke-width="1"/></g><circle cx="1387.6" cy="101.3" r="1.8" fill="#f2f2f2" stroke="#2f8fd2" stroke-width="1"/><circle cx="1397.3" cy="101.3" r="1.8" fill="#f2f2f2" stroke="#2f8fd2" stroke-width="1"/><text x="1392.4" y="97.4" font-family="Liberation Sans" font-size="14" fill="#f7931e" stroke="#f7931e" stroke-width="0.35" text-anchor="middle">?</text><path d="M1411.6 87.6H1419.1V98.7H1427.6V102.7H1411.6Z" fill="#eef6fc" stroke="#2f8fd2" stroke-width="1.5"/><text x="1425.5" y="97.4" font-family="Liberation Sans" font-size="14" fill="#f7931e" stroke="#f7931e" stroke-width="0.35" text-anchor="middle">?</text><defs><pattern id="hat" width="2.4" height="2.4" patternUnits="userSpaceOnUse" patternTransform="rotate(-45)"><rect width="2.4" height="2.4" fill="#e8f2fa"/><rect width="2.4" height="1" fill="#5aa6de"/></pattern></defs><path d="M1384 114.2H1391.8V124.4H1400.4V129.6H1384Z" fill="url(#hat)" stroke="#2a7fc0" stroke-width="1.4"/><text x="1397.8" y="124.1" font-family="Liberation Sans" font-size="14" fill="#f7931e" stroke="#f7931e" stroke-width="0.35" text-anchor="middle">?</text><path d="M1414 115.6V127.1H1426" fill="none" stroke="#2f8fd2" stroke-width="1.2"/><path d="M1414.0 114.2L1415.7 117.2L1412.3 117.2Z" fill="#2a7fc0" /><path d="M1428.0 127.1L1425.0 128.8L1425.0 125.4Z" fill="#2a7fc0" /><rect x="1417.2" y="121.2" width="3" height="3" fill="#f2f2f2" stroke="#2f8fd2" stroke-width="1"/><text x="1425.5" y="124.1" font-family="Liberation Sans" font-size="14" fill="#f7931e" stroke="#f7931e" stroke-width="0.35" text-anchor="middle">?</text><path d="M1446.2 62.2H1455.4V77.3H1439.1V67.6H1446.2Z" fill="#e6f1fa" stroke="#2f8fd2" stroke-width="1.4"/><path d="M1448 64.2H1453.4V75.2H1441.2V69.6H1448Z" fill="none" stroke="#f7931e" stroke-width="1.1"/><g fill="none" stroke="#2f8fd2" stroke-width="1.1"><path d="M1439.2 87.8H1447V90.60000000000001H1443.4V96.8H1439.2"/><path d="M1439.2 102.2H1451.6L1455.6 97.8H1450"/><path d="M1439.2 100.60000000000001H1451" stroke-width="0.9"/><rect x="1451.2" y="87.8" width="4" height="3.8"/><path d="M1448.8 97.60000000000001V100.2"/></g><circle cx="1443.6" cy="97.4" r="1.7" fill="#f2f2f2" stroke="#2f8fd2" stroke-width="1"/><circle cx="1448.8" cy="97.4" r="1.7" fill="#f2f2f2" stroke="#2f8fd2" stroke-width="1"/><circle cx="1451" cy="91.8" r="1.5" fill="#f2f2f2" stroke="#2f8fd2" stroke-width="1"/><g fill="none" stroke="#2f8fd2" stroke-width="1.1"><path d="M1439.2 114.6H1447V117.4H1443.4V123.6H1439.2"/><path d="M1439.2 129H1451.6L1455.6 124.6H1450"/><path d="M1439.2 127.4H1451" stroke-width="0.9"/><rect x="1451.2" y="114.6" width="4" height="3.8"/><path d="M1448.8 124.4V127"/></g><circle cx="1443.6" cy="124.2" r="1.7" fill="#f2f2f2" stroke="#2f8fd2" stroke-width="1"/><circle cx="1448.8" cy="124.2" r="1.7" fill="#f2f2f2" stroke="#2f8fd2" stroke-width="1"/><text x="1475.4" y="69.4" font-family="Liberation Sans" font-size="11.5" font-weight="normal" fill="#4a4a4a" text-anchor="middle">?</text><path d="M1469.3 72.7H1481.8M1467.1 76.6H1483.7" stroke="#4a4a4a" stroke-width="1.1"/><text x="1499.8" y="69.4" font-family="Liberation Sans" font-size="11.5" font-weight="normal" fill="#4a4a4a" text-anchor="middle">?</text><text x="1507.8" y="68.3" font-family="Liberation Sans" font-size="9.5" font-weight="bold" fill="#4a4a4a" text-anchor="middle">1</text><path d="M1496.9 77.3L1503.6 70.2H1511.1" fill="none" stroke="#4a4a4a" stroke-width="1.2"/><g fill="none" stroke="#4a4a4a" stroke-width="1.2"><path d="M1469.3 87.6V93.3M1483.1 87.6V102.7M1467.4 96.4V102.7"/><path d="M1470.4 89.6H1482M1468.6 101.5H1482" stroke-width="0.9"/><path d="M1469.3 93.3V101M1470 93.6H1482.6" stroke-width="0.8" stroke-dasharray="1 1.2"/></g><path d="M1469.8 89.6L1472.2 88.2L1472.2 91.0Z" fill="#4a4a4a" /><path d="M1482.6 89.6L1480.2 91.0L1480.2 88.2Z" fill="#4a4a4a" /><path d="M1467.9 101.5L1470.3 100.1L1470.3 102.9Z" fill="#4a4a4a" /><path d="M1482.6 101.5L1480.2 102.9L1480.2 100.1Z" fill="#4a4a4a" /><text x="1476.6" y="99.6" font-family="Liberation Sans" font-size="10.5" font-weight="normal" fill="#666" text-anchor="middle">?</text><g fill="none" stroke="#333" stroke-width="1.3"><path d="M1495.6 90.6H1509.2M1500 90.2V88.4H1504.9V90.2"/><path d="M1496.9 91.2L1497.5 102.7H1507.4L1508 91.2" fill="#fafafa"/><path d="M1500.4 93.4V100M1502.7 93.4V100M1504.9 93.4V100" stroke-width="1.1"/></g><circle cx="1475.6" cy="121.6" r="8.4" fill="#2a7fc0"/><text x="1475.6" y="127" font-family="Liberation Sans" font-size="15" font-weight="bold" fill="#ffffff" text-anchor="middle">?</text></svg>
<div class="r" style="left:2px;top:154.5px;width:26px;height:702px;background:#c8c8c8;"></div>
<div class="r" style="left:2px;top:154.5px;width:26px;height:27px;background:#f0f0f0;"></div>
<div class="r" style="left:2px;top:181px;width:26px;height:26px;background:#4a4a4a;"></div>
<div class="r" style="left:2px;top:207px;width:26px;height:53.5px;background:#f0f0f0;"></div>
<div class="r" style="left:28px;top:154.5px;width:1px;height:702px;background:#9c9c9c;"></div>
<div class="r" style="left:29px;top:154.5px;width:323px;height:18.5px;background:#cbcbcb;"></div>
<div class="r" style="left:29px;top:172.5px;width:323px;height:1px;background:#a6a6a6;"></div>
<div class="r" style="left:29px;top:173.5px;width:323px;height:69px;background:#5fcf8b;"></div>
<div class="r" style="left:29px;top:242px;width:323px;height:1.2px;background:#7f9a8a;"></div>
<div class="r" style="left:29px;top:243.2px;width:323px;height:573px;background:#f1f1f1;"></div>
<div class="r" style="left:29px;top:243.2px;width:323px;height:3px;background:linear-gradient(180deg,rgba(0,0,0,0.16),rgba(0,0,0,0));"></div>
<div class="r" style="left:29px;top:816px;width:323px;height:1px;background:#9a9a9a;"></div>
<div class="r" style="left:29px;top:817px;width:323px;height:39.5px;background:#f1f1f1;"></div>
<div class="r" style="left:352px;top:154.5px;width:1px;height:702px;background:#9a9a9a;"></div>
<div class="t" style="left:32.7px;top:157.74px;font-size:12px;line-height:12px;color:#444;letter-spacing:-0.408px;">Параметры</div>
<div class="t" style="left:32.5px;top:181.29px;font-size:11px;line-height:11px;color:#27463a;letter-spacing:-0.092px;">Эскиз &gt; Расчет МЦХ плоских фигур &gt; Собрать</div>
<div class="t" style="left:32.5px;top:195.09px;font-size:11px;line-height:11px;color:#27463a;letter-spacing:-0.083px;">контур</div>
<div class="t" style="left:120.0px;top:267.24px;font-size:12px;line-height:12px;color:#3a3a3a;font-weight:bold;letter-spacing:-0.096px;">Способ прохода неветвящихся узлов</div>
<div class="t" style="left:35.0px;top:292.54px;font-size:12px;line-height:12px;color:#5a5a5a;letter-spacing:-0.199px;">Автоматически</div>
<div class="t" style="left:173.2px;top:293.44px;font-size:12px;line-height:12px;color:#5a5a5a;letter-spacing:0.025px;">Вручную</div>
<div class="r" style="left:120px;top:288px;width:50px;height:21.5px;background:#ffffff;box-sizing:border-box;border:1px solid #b4b4b4;"></div>
<div class="r" style="left:121px;top:289px;width:20px;height:19.5px;background:#35c8e2;"></div>
<div class="t" style="left:51.2px;top:823.02px;font-size:12.5px;line-height:12.5px;color:#444;letter-spacing:-0.008px;">Укажите первый элемент для включения в</div>
<div class="t" style="left:51.2px;top:840.02px;font-size:12.5px;line-height:12.5px;color:#444;letter-spacing:-0.051px;">контур</div>
<svg class="r" style="left:33.5px;top:823px;" width="14" height="12" viewBox="0 0 14 12"><path d="M0.5 0.5H13.5V8.8H10.6V11.6L7.2 8.8H0.5Z" fill="#2e2e2e"/></svg>
<svg class="r" style="left:337px;top:823px;" width="9" height="9" viewBox="0 0 9 9"><path d="M0.5 0.5L8.5 8.5M8.5 0.5L0.5 8.5" stroke="#444" stroke-width="1.1" fill="none"/></svg>
<svg class="r" style="left:8.5px;top:158.5px;" width="14" height="17" viewBox="0 0 14 17"><g transform="scale(1.0)" fill="none" stroke="#2e2e2e" stroke-width="1.3"><rect x="1" y="0.8" width="2.6" height="2.2"/><path d="M2.3 3V14.6H9.5M2.3 5.4H9.5M2.3 10H9.5"/><ellipse cx="11" cy="5.4" rx="1.5" ry="1.1" fill="#2e2e2e"/><ellipse cx="11" cy="10" rx="1.5" ry="1.1" fill="#2e2e2e"/><ellipse cx="11" cy="14.6" rx="1.5" ry="1.1" fill="#2e2e2e"/></g></svg>
<svg class="r" style="left:8px;top:185px;" width="15" height="18" viewBox="0 0 15 18"><rect x="1" y="1" width="12.5" height="15.5" fill="none" stroke="#f2f2f2" stroke-width="1.4"/><g stroke="#f2f2f2" stroke-width="1.3" fill="none"><path d="M3 4.2H5.2M7 4.2H12M3 7.4L4 8.4L5.6 6.4M7 7.6H12M3 10.6L4 11.6L5.6 9.6M7 10.9H12M3 13.9H5.2M7 13.9H12"/></g></svg>
<div class="t" style="left:9.5px;top:207.88px;font-size:22px;line-height:22px;color:#2b2b2b;font-family:'Liberation Serif',serif;font-style:italic;">f</div>
<div class="t" style="left:15.5px;top:216.65px;font-size:14px;line-height:14px;color:#2b2b2b;">x</div>
<svg class="r" style="left:6.5px;top:237.5px;" width="17" height="18" viewBox="0 0 17 18"><g stroke="#222" stroke-width="3.2" stroke-linecap="round"><path d="M2 2.5H14.5M2 8.8H14.5M2 15.1H14.5"/></g></svg>
<svg class="r" style="left:335.5px;top:156.5px;" width="14" height="14" viewBox="0 0 14 14"><g transform="translate(7,7)"><circle r="3.6" fill="none" stroke="#2a2a2a" stroke-width="2.1"/><g stroke="#2a2a2a" stroke-width="2.3"><path d="M0 -4.2V-6.6M0 4.2V6.6M-4.2 0H-6.6M4.2 0H6.6M-3 -3L-4.7 -4.7M3 3L4.7 4.7M-3 3L-4.7 4.7M3 -3L4.7 -4.7"/></g></g></svg>
<svg class="r" style="left:300.3px;top:178px;" width="17" height="17" viewBox="0 0 17 17"><circle cx="8.5" cy="8.5" r="8.3" fill="#2b2b2b"/></svg>
<div class="t" style="left:303.9px;top:178.43px;font-size:16.5px;line-height:16.5px;color:#5fcf8b;font-weight:bold;">?</div>
<svg class="r" style="left:328.5px;top:179px;" width="14" height="17" viewBox="0 0 14 17"><g transform="scale(1.0)" fill="none" stroke="#2e2e2e" stroke-width="1.05"><rect x="1" y="0.8" width="2.6" height="2.2"/><path d="M2.3 3V14.6H9.5M2.3 5.4H9.5M2.3 10H9.5"/><ellipse cx="11" cy="5.4" rx="1.5" ry="1.1" fill="#2e2e2e"/><ellipse cx="11" cy="10" rx="1.5" ry="1.1" fill="#2e2e2e"/><ellipse cx="11" cy="14.6" rx="1.5" ry="1.1" fill="#2e2e2e"/></g></svg>
<svg class="r" style="left:328.5px;top:218.5px;" width="16" height="15.5" viewBox="0 0 16 15.5"><path d="M1 1L15 14.5M15 1L1 14.5" stroke="#f14a4a" stroke-width="2.2" fill="none"/></svg>
<div class="r" style="left:353px;top:154.5px;width:1245px;height:702px;background:linear-gradient(180deg,#dddede 0%,#d2d2d4 25%,#c5c5c9 50%,#b8b8be 75%,#ababb4 100%);"></div>
<svg class="r" style="left:0px;top:0px;" width="1600" height="900" viewBox="0 0 1600 900"><path d="M353 243.5H695.5V856" fill="none" stroke="#6f9ff2" stroke-width="1"/><path d="M383.5 244V856" fill="none" stroke="#ea8a90" stroke-width="1"/><path d="M353 555.5H695" fill="none" stroke="#8fe26a" stroke-width="1"/><g stroke="#2fcfe0" stroke-width="1" fill="none"><path d="M383.8 555V522M384 555H414"/><path d="M381.6 528L383.5 518.4L385.4 528ZM381.8 525H385.2M411.5 552.5L421 555L411.5 557.5ZM414.5 552.9V557.1"/><path d="M383.4 510.4L385.4 513.4L387.6 510.2M385.4 513.4V516.6M421.6 548L425.8 553.6M425.8 548L421.6 553.6" stroke-width="0.9"/></g><defs><clipPath id="cl1"><rect x="353" y="400" width="342.5" height="250"/></clipPath><clipPath id="cl2"><rect x="695.5" y="400" width="903" height="250"/></clipPath></defs><path d="M383.8 555.3C383.8 555.6 383.9 556.5 384.0 557.1C384.1 557.7 384.2 558.3 384.4 558.8C384.6 559.4 384.9 559.9 385.2 560.5C385.5 561.0 386.0 561.6 386.4 562.1C386.8 562.6 387.3 563.1 387.8 563.6C388.3 564.1 389.0 564.6 389.6 565.1C390.2 565.6 390.9 566.1 391.6 566.5C392.3 567.0 393.1 567.5 394.0 567.9C394.9 568.4 395.8 568.8 396.8 569.3C397.8 569.7 398.7 570.1 399.8 570.5C400.9 571.0 402.0 571.4 403.2 571.8C404.4 572.2 405.5 572.6 406.8 573.0C408.1 573.4 409.4 573.8 410.8 574.2C412.2 574.5 413.7 574.9 415.2 575.3C416.7 575.7 417.6 575.9 419.8 576.4C422.0 576.9 425.2 577.6 428.1 578.1C431.0 578.7 434.0 579.3 437.2 579.8C440.4 580.3 443.6 580.9 447.1 581.4C450.6 581.9 454.2 582.5 458.0 583.0C461.8 583.5 465.6 584.0 469.6 584.5C473.6 585.0 477.9 585.5 482.2 586.0C486.5 586.4 490.9 586.9 495.5 587.4C500.1 587.8 504.9 588.2 509.8 588.6C514.7 589.1 519.7 589.4 524.9 589.8C530.1 590.2 535.3 590.5 540.8 590.9C546.2 591.2 551.9 591.5 557.6 591.8C563.3 592.1 569.2 592.3 575.2 592.6C581.2 592.8 587.4 593.0 593.7 593.2C600.0 593.3 606.5 593.5 613.1 593.6C619.7 593.7 626.4 593.8 633.3 593.9C640.2 593.9 647.1 594.0 654.3 594.0C661.4 594.0 668.8 594.0 676.2 594.0C683.7 594.0 691.3 593.9 699.0 593.8C706.7 593.8 714.6 593.7 722.6 593.6C730.6 593.4 738.7 593.3 747.0 593.2C755.3 593.0 763.8 592.8 772.4 592.6C781.0 592.4 789.6 592.2 798.5 592.0C807.4 591.8 816.4 591.5 825.5 591.3C834.6 591.0 844.0 590.8 853.4 590.5C862.8 590.2 872.4 589.9 882.1 589.6C891.8 589.2 901.7 588.9 911.7 588.6C921.7 588.2 931.8 587.9 942.1 587.5C952.4 587.2 962.8 586.8 973.4 586.4C984.0 586.0 994.7 585.6 1005.6 585.2C1016.5 584.8 1027.5 584.4 1038.6 584.0C1049.7 583.6 1061.0 583.2 1072.4 582.7C1083.8 582.3 1095.4 581.9 1107.1 581.4C1118.8 581.0 1130.6 580.5 1142.6 580.1C1154.6 579.7 1166.7 579.2 1179.0 578.8C1191.3 578.3 1203.7 577.8 1216.3 577.4C1228.9 576.9 1241.6 576.5 1254.4 576.0C1267.2 575.6 1280.3 575.1 1293.4 574.6C1306.5 574.2 1319.8 573.7 1333.2 573.3C1346.6 572.8 1360.1 572.4 1373.8 571.9C1387.5 571.5 1401.3 571.0 1415.3 570.6C1429.3 570.2 1443.4 569.7 1457.7 569.3C1472.0 568.9 1486.4 568.5 1500.9 568.0C1515.5 567.6 1537.7 567.0 1545.0 566.8C1555 565.6 1566.2 564.6 1567.3 555.7" fill="none" stroke="#1a7cf2" stroke-width="1.9" clip-path="url(#cl1)"/><path d="M383.8 555.3C383.8 555.0 383.9 554.0 384.0 553.4C384.1 552.7 384.2 552.1 384.4 551.4C384.6 550.7 384.9 550.1 385.2 549.4C385.5 548.7 386.0 548.0 386.4 547.3C386.8 546.6 387.3 545.9 387.8 545.2C388.3 544.5 389.0 543.8 389.6 543.1C390.2 542.3 390.9 541.6 391.6 540.9C392.3 540.1 393.1 539.4 394.0 538.6C394.9 537.8 395.8 537.1 396.8 536.3C397.8 535.5 398.7 534.7 399.8 533.9C400.9 533.1 402.0 532.3 403.2 531.5C404.4 530.6 405.5 529.8 406.8 529.0C408.1 528.1 409.4 527.3 410.8 526.4C412.2 525.5 413.7 524.6 415.2 523.8C416.7 522.9 417.6 522.3 419.8 521.1C422.0 519.9 425.2 518.1 428.1 516.5C431.0 515.0 434.0 513.4 437.2 511.8C440.4 510.2 443.6 508.6 447.1 507.0C450.6 505.4 454.2 503.8 458.0 502.2C461.8 500.5 465.6 498.9 469.6 497.3C473.6 495.7 477.9 494.1 482.2 492.5C486.5 490.9 490.9 489.3 495.5 487.7C500.1 486.1 504.9 484.6 509.8 483.0C514.7 481.5 519.7 479.9 524.9 478.4C530.1 476.9 535.3 475.3 540.8 473.9C546.2 472.4 551.9 470.9 557.6 469.6C563.3 468.2 569.2 466.9 575.2 465.6C581.2 464.3 587.4 463.1 593.7 462.0C600.0 460.8 606.5 459.8 613.1 458.7C619.7 457.7 626.4 456.7 633.3 455.8C640.2 454.9 647.1 454.0 654.3 453.2C661.4 452.4 668.8 451.6 676.2 450.9C683.7 450.2 691.3 449.5 699.0 448.9C706.7 448.3 714.6 447.8 722.6 447.3C730.6 446.8 738.7 446.4 747.0 446.0C755.3 445.6 763.8 445.3 772.4 445.1C781.0 444.8 789.6 444.6 798.5 444.5C807.4 444.4 816.4 444.3 825.5 444.3C834.6 444.3 844.0 444.4 853.4 444.5C862.8 444.6 872.4 444.8 882.1 445.1C891.8 445.4 901.7 445.7 911.7 446.2C921.7 446.6 931.8 447.1 942.1 447.6C952.4 448.2 962.8 448.9 973.4 449.6C984.0 450.3 994.7 451.1 1005.6 452.0C1016.5 452.9 1027.5 453.9 1038.6 454.9C1049.7 456.0 1061.0 457.1 1072.4 458.3C1083.8 459.6 1095.4 460.9 1107.1 462.3C1118.8 463.7 1130.6 465.1 1142.6 466.7C1154.6 468.3 1166.7 469.9 1179.0 471.7C1191.3 473.4 1203.7 475.2 1216.3 477.1C1228.9 479.0 1241.6 481.0 1254.4 483.1C1267.2 485.1 1280.3 487.3 1293.4 489.5C1306.5 491.7 1319.8 494.0 1333.2 496.4C1346.6 498.8 1360.1 501.3 1373.8 503.9C1387.5 506.5 1401.3 509.1 1415.3 512.0C1429.3 514.8 1443.4 517.7 1457.7 520.8C1472.0 523.9 1486.4 527.1 1500.9 530.5C1515.5 534.0 1537.7 539.5 1545.0 541.3C1552.5 542.8 1565 547.2 1567.3 555.7" fill="none" stroke="#08ecfb" stroke-width="1.9" clip-path="url(#cl1)"/><path d="M383.8 555.3C383.8 555.6 383.9 556.5 384.0 557.1C384.1 557.7 384.2 558.3 384.4 558.8C384.6 559.4 384.9 559.9 385.2 560.5C385.5 561.0 386.0 561.6 386.4 562.1C386.8 562.6 387.3 563.1 387.8 563.6C388.3 564.1 389.0 564.6 389.6 565.1C390.2 565.6 390.9 566.1 391.6 566.5C392.3 567.0 393.1 567.5 394.0 567.9C394.9 568.4 395.8 568.8 396.8 569.3C397.8 569.7 398.7 570.1 399.8 570.5C400.9 571.0 402.0 571.4 403.2 571.8C404.4 572.2 405.5 572.6 406.8 573.0C408.1 573.4 409.4 573.8 410.8 574.2C412.2 574.5 413.7 574.9 415.2 575.3C416.7 575.7 417.6 575.9 419.8 576.4C422.0 576.9 425.2 577.6 428.1 578.1C431.0 578.7 434.0 579.3 437.2 579.8C440.4 580.3 443.6 580.9 447.1 581.4C450.6 581.9 454.2 582.5 458.0 583.0C461.8 583.5 465.6 584.0 469.6 584.5C473.6 585.0 477.9 585.5 482.2 586.0C486.5 586.4 490.9 586.9 495.5 587.4C500.1 587.8 504.9 588.2 509.8 588.6C514.7 589.1 519.7 589.4 524.9 589.8C530.1 590.2 535.3 590.5 540.8 590.9C546.2 591.2 551.9 591.5 557.6 591.8C563.3 592.1 569.2 592.3 575.2 592.6C581.2 592.8 587.4 593.0 593.7 593.2C600.0 593.3 606.5 593.5 613.1 593.6C619.7 593.7 626.4 593.8 633.3 593.9C640.2 593.9 647.1 594.0 654.3 594.0C661.4 594.0 668.8 594.0 676.2 594.0C683.7 594.0 691.3 593.9 699.0 593.8C706.7 593.8 714.6 593.7 722.6 593.6C730.6 593.4 738.7 593.3 747.0 593.2C755.3 593.0 763.8 592.8 772.4 592.6C781.0 592.4 789.6 592.2 798.5 592.0C807.4 591.8 816.4 591.5 825.5 591.3C834.6 591.0 844.0 590.8 853.4 590.5C862.8 590.2 872.4 589.9 882.1 589.6C891.8 589.2 901.7 588.9 911.7 588.6C921.7 588.2 931.8 587.9 942.1 587.5C952.4 587.2 962.8 586.8 973.4 586.4C984.0 586.0 994.7 585.6 1005.6 585.2C1016.5 584.8 1027.5 584.4 1038.6 584.0C1049.7 583.6 1061.0 583.2 1072.4 582.7C1083.8 582.3 1095.4 581.9 1107.1 581.4C1118.8 581.0 1130.6 580.5 1142.6 580.1C1154.6 579.7 1166.7 579.2 1179.0 578.8C1191.3 578.3 1203.7 577.8 1216.3 577.4C1228.9 576.9 1241.6 576.5 1254.4 576.0C1267.2 575.6 1280.3 575.1 1293.4 574.6C1306.5 574.2 1319.8 573.7 1333.2 573.3C1346.6 572.8 1360.1 572.4 1373.8 571.9C1387.5 571.5 1401.3 571.0 1415.3 570.6C1429.3 570.2 1443.4 569.7 1457.7 569.3C1472.0 568.9 1486.4 568.5 1500.9 568.0C1515.5 567.6 1537.7 567.0 1545.0 566.8C1555 565.6 1566.2 564.6 1567.3 555.7" fill="none" stroke="#1a7cf2" stroke-width="1.5" clip-path="url(#cl2)"/><path d="M383.8 555.3C383.8 555.0 383.9 554.0 384.0 553.4C384.1 552.7 384.2 552.1 384.4 551.4C384.6 550.7 384.9 550.1 385.2 549.4C385.5 548.7 386.0 548.0 386.4 547.3C386.8 546.6 387.3 545.9 387.8 545.2C388.3 544.5 389.0 543.8 389.6 543.1C390.2 542.3 390.9 541.6 391.6 540.9C392.3 540.1 393.1 539.4 394.0 538.6C394.9 537.8 395.8 537.1 396.8 536.3C397.8 535.5 398.7 534.7 399.8 533.9C400.9 533.1 402.0 532.3 403.2 531.5C404.4 530.6 405.5 529.8 406.8 529.0C408.1 528.1 409.4 527.3 410.8 526.4C412.2 525.5 413.7 524.6 415.2 523.8C416.7 522.9 417.6 522.3 419.8 521.1C422.0 519.9 425.2 518.1 428.1 516.5C431.0 515.0 434.0 513.4 437.2 511.8C440.4 510.2 443.6 508.6 447.1 507.0C450.6 505.4 454.2 503.8 458.0 502.2C461.8 500.5 465.6 498.9 469.6 497.3C473.6 495.7 477.9 494.1 482.2 492.5C486.5 490.9 490.9 489.3 495.5 487.7C500.1 486.1 504.9 484.6 509.8 483.0C514.7 481.5 519.7 479.9 524.9 478.4C530.1 476.9 535.3 475.3 540.8 473.9C546.2 472.4 551.9 470.9 557.6 469.6C563.3 468.2 569.2 466.9 575.2 465.6C581.2 464.3 587.4 463.1 593.7 462.0C600.0 460.8 606.5 459.8 613.1 458.7C619.7 457.7 626.4 456.7 633.3 455.8C640.2 454.9 647.1 454.0 654.3 453.2C661.4 452.4 668.8 451.6 676.2 450.9C683.7 450.2 691.3 449.5 699.0 448.9C706.7 448.3 714.6 447.8 722.6 447.3C730.6 446.8 738.7 446.4 747.0 446.0C755.3 445.6 763.8 445.3 772.4 445.1C781.0 444.8 789.6 444.6 798.5 444.5C807.4 444.4 816.4 444.3 825.5 444.3C834.6 444.3 844.0 444.4 853.4 444.5C862.8 444.6 872.4 444.8 882.1 445.1C891.8 445.4 901.7 445.7 911.7 446.2C921.7 446.6 931.8 447.1 942.1 447.6C952.4 448.2 962.8 448.9 973.4 449.6C984.0 450.3 994.7 451.1 1005.6 452.0C1016.5 452.9 1027.5 453.9 1038.6 454.9C1049.7 456.0 1061.0 457.1 1072.4 458.3C1083.8 459.6 1095.4 460.9 1107.1 462.3C1118.8 463.7 1130.6 465.1 1142.6 466.7C1154.6 468.3 1166.7 469.9 1179.0 471.7C1191.3 473.4 1203.7 475.2 1216.3 477.1C1228.9 479.0 1241.6 481.0 1254.4 483.1C1267.2 485.1 1280.3 487.3 1293.4 489.5C1306.5 491.7 1319.8 494.0 1333.2 496.4C1346.6 498.8 1360.1 501.3 1373.8 503.9C1387.5 506.5 1401.3 509.1 1415.3 512.0C1429.3 514.8 1443.4 517.7 1457.7 520.8C1472.0 523.9 1486.4 527.1 1500.9 530.5C1515.5 534.0 1537.7 539.5 1545.0 541.3C1552.5 542.8 1565 547.2 1567.3 555.7" fill="none" stroke="#08ecfb" stroke-width="1.7" clip-path="url(#cl2)"/><g stroke="#ed1c24" stroke-width="4.4" stroke-linecap="round" stroke-linejoin="round" fill="none"><path d="M1025 337L848 444.2M888.7 395L848 444.2L919 419.5"/><path d="M1027 339.5L868 590M876.4 538L868 590L919 552.6"/></g><defs><linearGradient id="gy" x1="0" y1="0" x2="1" y2="0"><stop offset="0" stop-color="#56c266"/><stop offset="0.5" stop-color="#8fdc98"/><stop offset="1" stop-color="#4aa85a"/></linearGradient><linearGradient id="gx" x1="0" y1="0" x2="0" y2="1"><stop offset="0" stop-color="#d9606a"/><stop offset="0.45" stop-color="#f08890"/><stop offset="1" stop-color="#e56872"/></linearGradient></defs><rect x="411.6" y="753" width="4.6" height="37" fill="url(#gy)"/><path d="M413.9 736.6L418.5 753.6H409.2Z" fill="#5cc86c"/><rect x="419" y="793" width="37" height="4.7" fill="url(#gx)"/><path d="M472.2 795.4L455 790.8V800Z" fill="#ea727c"/><circle cx="413.8" cy="795.5" r="6" fill="#5f7f9a" stroke="#ddd04a" stroke-width="1.8"/><circle cx="413.8" cy="795.5" r="3.6" fill="#3a7ac8"/><path d="M412.2 798L415.4 793" stroke="#6aa0e6" stroke-width="1"/><path d="M410 724.6L413.8 729.6L417.6 724.6M413.8 729.6V733.6" fill="none" stroke="#4fc05e" stroke-width="1.4"/><path d="M476.4 791L483.8 799.8M483.8 791L476.4 799.8" fill="none" stroke="#e8505e" stroke-width="1.4"/></svg>
<div class="t" style="left:1050.5px;top:293.89px;font-size:26px;line-height:26px;color:#ed1c24;letter-spacing:0.397px;-webkit-text-stroke:0.95px #ed1c24;">Выбираем по очереди вехнюю и</div>
<div class="t" style="left:1050.5px;top:327.19px;font-size:26px;line-height:26px;color:#ed1c24;letter-spacing:0.073px;-webkit-text-stroke:0.95px #ed1c24;">нижнюю дужки</div>
<div class="r" style="left:1520px;top:187px;width:52px;height:50.5px;background:#4b4b4b;"></div>
<svg class="r" style="left:1520px;top:187px;" width="52" height="51" viewBox="0 0 52 51"><g fill="none" stroke="#5edb8b" stroke-width="2.6"><path d="M9 6.7H24.6V25H43V40.8H9Z"/><path d="M33.8 10H47.1"/></g><circle cx="9" cy="6.7" r="2.7" fill="#4b4b4b" stroke="#5edb8b" stroke-width="2.6"/><circle cx="24.6" cy="6.7" r="2.7" fill="#4b4b4b" stroke="#5edb8b" stroke-width="2.6"/><circle cx="24.6" cy="25" r="2.7" fill="#4b4b4b" stroke="#5edb8b" stroke-width="2.6"/><circle cx="43" cy="25" r="2.7" fill="#4b4b4b" stroke="#5edb8b" stroke-width="2.6"/><circle cx="43" cy="40.8" r="2.7" fill="#4b4b4b" stroke="#5edb8b" stroke-width="2.6"/><circle cx="9" cy="40.8" r="2.7" fill="#4b4b4b" stroke="#5edb8b" stroke-width="2.6"/></svg>
<div class="t" style="left:1185.0px;top:753.22px;font-size:21px;line-height:21px;color:rgba(150,150,158,0.36);letter-spacing:-0.091px;">Активация Windows</div>
<div class="t" style="left:1185.0px;top:781.30px;font-size:15px;line-height:15px;color:rgba(150,150,158,0.27);letter-spacing:-0.135px;">Чтобы активировать Windows, перейдите в раздел</div>
<div class="t" style="left:1185.0px;top:801.80px;font-size:15px;line-height:15px;color:rgba(150,150,158,0.27);letter-spacing:-0.148px;">"Параметры".</div>
<div class="r" style="left:659px;top:154.5px;width:845px;height:27.2px;background:#8a8a8a;"></div>
<div class="r" style="left:660.4px;top:154.5px;width:842.6px;height:26px;background:#f0f0f0;"></div>
<div class="r" style="left:677.7px;top:154.5px;width:26.399999999999977px;height:26px;background:#4a4a4a;"></div>
<div class="r" style="left:706.2px;top:154.5px;width:48.5px;height:26px;background:#4a4a4a;"></div>
<div class="r" style="left:756.4px;top:154.5px;width:26.5px;height:26px;background:#4a4a4a;"></div>
<div class="r" style="left:784.3px;top:154.5px;width:27.200000000000045px;height:26px;background:#4a4a4a;"></div>
<div class="r" style="left:1107.1px;top:154.5px;width:26.800000000000182px;height:26px;background:#4a4a4a;"></div>
<div class="r" style="left:1288.9px;top:154.5px;width:26.09999999999991px;height:26px;background:#4a4a4a;"></div>
<div class="r" style="left:1397.3px;top:154.5px;width:47.600000000000136px;height:26px;background:#4a4a4a;"></div>
<div class="r" style="left:676px;top:154.5px;width:1px;height:26px;background:#8c8c8c;"></div>
<div class="r" style="left:947.5px;top:154.5px;width:1px;height:26px;background:#8c8c8c;"></div>
<div class="r" style="left:1105px;top:154.5px;width:1px;height:26px;background:#8c8c8c;"></div>
<div class="r" style="left:1185.3px;top:154.5px;width:1px;height:26px;background:#8c8c8c;"></div>
<div class="r" style="left:1286.8px;top:154.5px;width:1px;height:26px;background:#8c8c8c;"></div>
<div class="r" style="left:1395.3px;top:154.5px;width:1px;height:26px;background:#8c8c8c;"></div>
<div class="r" style="left:1446.6px;top:154.5px;width:1px;height:26px;background:#8c8c8c;"></div>
<svg class="r" style="left:0px;top:0px;" width="1600" height="900" viewBox="0 0 1600 900"><rect x="662.4" y="158.6" width="1.8" height="1.8" fill="#333"/><rect x="662.4" y="161.9" width="1.8" height="1.8" fill="#333"/><rect x="665.5" y="158.6" width="1.8" height="1.8" fill="#333"/><rect x="665.5" y="161.9" width="1.8" height="1.8" fill="#333"/><rect x="668.6" y="158.6" width="1.8" height="1.8" fill="#333"/><rect x="668.6" y="161.9" width="1.8" height="1.8" fill="#333"/><rect x="671.7" y="158.6" width="1.8" height="1.8" fill="#333"/><rect x="671.7" y="161.9" width="1.8" height="1.8" fill="#333"/><g fill="none" stroke="#3ed56c" stroke-width="1.3"><path d="M684 160H691.5V167.5H698.7V174.2H684Z"/></g><g fill="#3ed56c"><circle cx="684" cy="160" r="1.3"/><circle cx="691.5" cy="160" r="1.3"/><circle cx="691.5" cy="167.5" r="1.3"/><circle cx="698.7" cy="167.5" r="1.3"/><circle cx="698.7" cy="174.2" r="1.3"/><circle cx="684" cy="174.2" r="1.3"/></g><g fill="none" stroke-linecap="round"><path d="M713 169.5L722.5 161.2A3.6 3.6 0 0 1 727.6 166.2L720 173.6A2.2 2.2 0 0 1 716.8 170.6L723.4 164.4" stroke="#e8e8e8" stroke-width="2.6"/><path d="M713 169.5L722.5 161.2A3.6 3.6 0 0 1 727.6 166.2L720 173.6A2.2 2.2 0 0 1 716.8 170.6L723.4 164.4" stroke="#9a9a9a" stroke-width="0.7"/></g><path d="M740 163.9H749.6L744.8 169.1Z" fill="#ffffff"/><g stroke="#e4e4e4" stroke-width="1.4" fill="none"><path d="M761 166.6L770 158.9M764.3 168.8L773.3 161.1M768 174.8H778.2M773.1 167.2V174.8"/></g><g stroke="#e4e4e4" stroke-width="1.3" fill="none"><path d="M794.3 162.6Q800 156.6 805.8 162.6Q800 167.4 794.3 162.6Z"/><circle cx="800" cy="162.2" r="1.6" fill="#e4e4e4"/><path d="M789.6 171.8L796.8 164.2M792.2 173.8L799.2 166.6M795.3 173.6H803M799.2 169.2V173.6"/></g><g stroke="#222222" fill="none"><path d="M823 162.7Q828.8 156.2 834.6 162.7Q828.8 167.6 823 162.7Z" fill="#222222" stroke-width="0.8"/><circle cx="828.8" cy="162.3" r="1.9" fill="#f0f0f0" stroke="none"/><circle cx="828.8" cy="162.3" r="0.8" fill="#222222" stroke="none"/><path d="M821.7 166.8V174H828.6" stroke-width="1.2"/><path d="M820 168.8L821.7 166.2L823.4 168.8M826.8 172.3L829.2 174L826.8 175.7" stroke-width="1"/></g><g stroke="#2e2e2e" stroke-width="1.4" fill="none"><path d="M848.7 160.3V176M854.2 160.3V176M859.7 160.3V176M846.4 163.8H862M846.4 167.9H862M846.4 172H862"/></g><path d="M874.6 163.9H884.4L879.5 169.1Z" fill="#222222"/><path d="M896.2 174.5H904.4V159.7H912" fill="none" stroke="#222222" stroke-width="1.3"/><g fill="none" stroke="#222222"><circle cx="930.5" cy="165.3" r="5.2" stroke-width="1.4"/><path d="M934.4 169.2L939 173.6" stroke-width="2"/><path d="M929.3 161.8V166.6H934" stroke-width="2.2"/></g><g fill="none" stroke="#222222"><circle cx="960" cy="165.3" r="5.2" stroke-width="1.3"/><path d="M963.9 169.2L968.6 173.4" stroke-width="1.9"/><path d="M962.5 161H970.4V168.3H965" stroke-width="1" stroke-dasharray="1 1"/><path d="M962.5 161V168" stroke-width="0.9" stroke-dasharray="1 1"/></g><path d="M983 163.9H993L988.0 169.1Z" fill="#222222"/><path d="M1004.6 174.8H1017.7L1021.2 168.6H1015V164.4H1017.4L1013 159.2L1008.6 164.4H1011V168.6H1008.6Z" fill="#222222"/><path d="M1012.2 163.4H1013.8V170.8H1012.2Z" fill="#f0f0f0"/><g fill="none" stroke="#222222" stroke-width="1.3"><rect x="1033.3" y="169.3" width="5.4" height="5.4"/><path d="M1037.4 169V162M1039 170.7H1046.5"/><path d="M1035.6 163.6L1037.4 161L1039.2 163.6M1045 168.9L1047.6 170.7L1045 172.5" stroke-width="1"/><path d="M1041 161.5Q1045.8 163.2 1046.6 168" stroke-width="1" stroke-dasharray="1.2 1"/></g><g fill="none" stroke="#222222" stroke-width="1.2"><rect x="1066.6" y="166.8" width="3.6" height="3.6"/><path d="M1068.4 166.8V160.4M1070.2 168.6H1076M1066.6 170.4L1062.4 174"/><path d="M1066.6 162L1068.4 159.2L1070.2 162ZM1075 166.9L1077.8 168.6L1075 170.3ZM1061.4 172L1061.4 174.9L1064.3 174.5Z" fill="#222222" stroke-width="0.6"/></g><path d="M1088.4 163.9H1098L1093.2 169.1Z" fill="#222222"/><path d="M1120.4 157.8L1128.8 161.7V171.3L1120.4 175.6L1112 171.3V161.7Z" fill="#ffffff"/><path d="M1112 161.7L1120.4 165.8L1128.8 161.7M1120.4 165.8V175.6" fill="none" stroke="#4a4a4a" stroke-width="0.9"/><g fill="none" stroke="#222222" stroke-width="1"><path d="M1148.8 158.2L1157 162V171.6L1148.8 175.8L1140.6 171.6V162Z"/><path d="M1140.6 162L1148.8 166.2L1157 162M1148.8 166.2V175.8"/><path d="M1148.8 158.2V167.6L1140.6 171.6M1148.8 167.6L1157 171.6" stroke-width="0.8"/></g><path d="M1169 163.9H1178.6L1173.8 169.1Z" fill="#222222"/><g fill="none" stroke="#222222"><path d="M1193.3 166.2Q1200.2 158.8 1207 166.2Q1200.2 172.6 1193.3 166.2Z" stroke-width="1.8"/><circle cx="1200.2" cy="165.9" r="2" fill="#222222" stroke="none"/><path d="M1192.6 158.5L1208.4 173.8" stroke-width="1.3"/></g><path d="M1220.6 163.9H1230.2L1225.4 169.1Z" fill="#222222"/><path d="M1242.2 161.3H1258.6V172H1242.2Z" fill="#222222"/><path d="M1244 166.5Q1250.4 160.6 1256.8 166.5Q1250.4 171.6 1244 166.5Z" fill="#f0f0f0"/><circle cx="1250.4" cy="166.3" r="2.3" fill="#222222"/><circle cx="1250.4" cy="166.3" r="0.8" fill="#f0f0f0"/><path d="M1242 158.6L1245.6 161.8M1255.2 171L1258.3 174.2" stroke="#222222" stroke-width="1.2"/><path d="M1254.8 171.8H1258.6V174.6Z" fill="#222222"/><path d="M1270.6 163.9H1280.2L1275.4 169.1Z" fill="#222222"/><g fill="none" stroke="#f0f0f0" stroke-width="1.2"><path d="M1297.4 170.4L1307.2 164"/><circle cx="1296.1" cy="171.3" r="1.7"/><circle cx="1308.5" cy="163.1" r="1.7"/></g><path d="M1296.5 160.6L1297.55 162.55L1299.5 163.6L1297.55 164.65L1296.5 166.6L1295.45 164.65L1293.5 163.6L1295.45 162.55Z" fill="none" stroke="#f0f0f0" stroke-width="1"/><path d="M1307.5 169.2L1308.55 171.15L1310.5 172.2L1308.55 173.25L1307.5 175.2L1306.45 173.25L1304.5 172.2L1306.45 171.15Z" fill="none" stroke="#f0f0f0" stroke-width="1"/><path d="M1322.5 159H1334.5L1330.5 163H1322.5Z" fill="#222222"/><path d="M1322.5 163H1330.5V173.6H1322.5Z" fill="#fafafa" stroke="#222222" stroke-width="0.9"/><path d="M1322.5 163L1330.5 173.6" stroke="#222222" stroke-width="0.8"/><path d="M1330.5 163L1334.5 159V166L1330.5 170Z" fill="#6a6a6a" stroke="#222222" stroke-width="0.7"/><path d="M1330.5 168.4L1334.2 165H1339L1335.4 168.4Z" fill="#9a9a9a" stroke="#222222" stroke-width="0.6"/><path d="M1330.5 168.4H1335.4V173.8H1330.5Z" fill="#d0d0d0" stroke="#222222" stroke-width="0.7"/><path d="M1335.4 168.4L1339 165V170.6L1335.4 173.8Z" fill="#555" stroke="#222222" stroke-width="0.6"/><path d="M1350.2 162.6H1354.4V170.4H1361.4V174.6H1350.2Z" fill="#222222"/><g fill="none" stroke="#222222" stroke-width="0.9"><path d="M1352 161L1355.6 158.4L1358.4 160.8V166.6L1363 170.2L1366 172L1362.4 174.4"/><path d="M1354.4 162.6L1357 160.6M1354.4 170.4L1358.4 166.6M1361.4 170.4L1364.6 168.2L1361 165.4L1358.4 166.8" stroke-dasharray="1.4 0.8"/></g><path d="M1379 163.9H1388.6L1383.8 169.1Z" fill="#222222"/><path d="M1401.6 158.8H1419.3L1413 166.6V174.9H1408.2V166.6Z" fill="#ffffff"/><path d="M1430.7 163.9H1440.3L1435.5 169.1Z" fill="#ffffff"/><g fill="#cdcdcd"><path d="M1455 174.6L1456 171L1463.6 163.4L1466.2 166L1458.6 173.6Z"/><path d="M1463.4 161.4L1468.2 166.2L1469.4 165L1467.8 163.4L1470.2 161A1.9 1.9 0 0 0 1467.6 158.4L1465.2 160.8L1464.6 160.2Z"/></g><path d="M1483.6 160.6L1497.8 175.2M1497.8 160.6L1483.6 175.2" stroke="#f03c3c" stroke-width="2.4" fill="none"/></svg>
<div class="r" style="left:0px;top:858px;width:1600px;height:42px;background:linear-gradient(90deg,#c6d3d9 0px,#d3dadb 60px,#e6ddd2 340px,#e9ddd1 700px,#e8ddd3 960px,#e7ddd0 1010px,#e3e4b6 1100px,#e5e3bc 1135px,#e9dfce 1205px,#ecdfd4 1300px,#efe4d7 1400px,#efe1d6 1500px,#eeddd5 1600px);"></div>
<div class="r" style="left:51px;top:859px;width:298px;height:41px;background:#ffffff;"></div>
<svg class="r" style="left:16px;top:870.5px;" width="18" height="17" viewBox="0 0 18 17"><path d="M0 2.4L7.3 1.4V8H0ZM8.3 1.25L18 0V8H8.3ZM0 9H7.3V15.6L0 14.6ZM8.3 9H18V17L8.3 15.75Z" fill="#0a0a0a"/></svg>
<svg class="r" style="left:61px;top:867px;" width="20" height="21" viewBox="0 0 20 21"><circle cx="12" cy="8.5" r="5.4" fill="none" stroke="#2a2a2a" stroke-width="1.5"/><path d="M8.2 12.6L1.2 19.6" stroke="#2a2a2a" stroke-width="1.7"/></svg>
<div class="t" style="left:92.5px;top:872.06px;font-size:16px;line-height:16px;color:#3a3a3a;letter-spacing:0.031px;">Поиск</div>
<svg class="r" style="left:270px;top:860px;" width="80" height="40" viewBox="0 0 80 40"><defs><radialGradient id="sg" cx="45%" cy="40%" r="60%"><stop offset="0" stop-color="#ffd84d"/><stop offset="1" stop-color="#f5b21e"/></radialGradient></defs><path d="M30.00 7.10 33.45 15.25 41.60 18.70 33.45 22.15 30.00 30.30 26.55 22.15 18.40 18.70 26.55 15.25Z" fill="url(#sg)" stroke="#f7bd2a" stroke-width="3.48" stroke-linejoin="round"/><path d="M54.00 16.50 55.78 20.72 60.00 22.50 55.78 24.28 54.00 28.50 52.22 24.28 48.00 22.50 52.22 20.72Z" fill="#fbc530" stroke="#fbc530" stroke-width="1.80" stroke-linejoin="round"/><path d="M10.00 22.60 11.31 25.69 14.40 27.00 11.31 28.31 10.00 31.40 8.69 28.31 5.60 27.00 8.69 25.69Z" fill="#2ba5ea" stroke="#2ba5ea" stroke-width="1.32" stroke-linejoin="round"/><circle cx="47" cy="8.8" r="1.9" fill="#f06a2a"/><circle cx="66" cy="28.8" r="1.9" fill="#7ac043"/></svg>
<svg class="r" style="left:0px;top:0px;" width="1600" height="900" viewBox="0 0 1600 900"><g fill="none" stroke="#2a2622" stroke-width="1.2"><path d="M367.2 871.2V873.2H377.2V871.2"/><rect x="367.2" y="875.5" width="10" height="6.2"/><path d="M367.2 886.7V883.3H377.2V886.7"/><path d="M382 871.2V874.6M382 879.4V886.7"/></g><rect x="381" y="875.8" width="2" height="2" fill="#111"/><defs><linearGradient id="eg1" x1="0" y1="0" x2="1" y2="1"><stop offset="0" stop-color="#35c1f1"/><stop offset="0.55" stop-color="#2aa3e6"/><stop offset="1" stop-color="#1562b8"/></linearGradient><linearGradient id="eg2" x1="0" y1="0" x2="1" y2="0"><stop offset="0" stop-color="#2fbfe8"/><stop offset="1" stop-color="#5fd05a"/></linearGradient></defs><circle cx="428.4" cy="879.4" r="12.2" fill="url(#eg1)"/><path d="M417.4 874.4A12.2 12.2 0 0 1 440.6 879.2Q440.4 884 435 884.6Q431 884.8 431.2 882.4Q433 880.6 432.4 878.4Q430.6 874.2 425.4 874.4Q420.4 874.6 417.4 874.4Z" fill="url(#eg2)"/><path d="M421.4 879.4Q421.6 887.4 430.2 890.4Q434.6 891 438.2 887.6Q432.6 889.4 428.6 886.2Q425.8 883.4 426.6 879.6Q424 877 421.4 879.4Z" fill="#0f55a4"/><path d="M427.2 879.2Q426.6 883 429.8 885.2Q433.2 886.2 436 884.6Q430.4 884.8 431.2 881.4Q432 879 430 877.8Q428 877.6 427.2 879.2Z" fill="#e8ddd2"/><path d="M468.6 870.4H476.2L477.8 872.2H490.8V887.8H468.6Z" fill="#e3a91e"/><path d="M468.6 873.4H490.8V887.8H468.6Z" fill="#fbd35c"/><path d="M472.4 881H487V887.8H483.4V884.6H476V887.8H472.4Z" fill="#2b8be0"/><rect x="459.3" y="897.6" width="42.2" height="2.4" fill="#0a78d4"/><circle cx="531.3" cy="879.4" r="12.2" fill="#ffffff"/><path d="M524.4 871.6L531.2 880.4L538.4 871.4M531.2 880V889.6" fill="none" stroke="#fc3f1d" stroke-width="2.8" stroke-linecap="round"/><path d="M535.4 875.2L538.4 871.4" stroke="#ff5ca8" stroke-width="2.8" stroke-linecap="round"/><rect x="511.3" y="897.6" width="41.7" height="2.4" fill="#0a78d4"/><rect x="573" y="867.3" width="19" height="24" rx="1.6" fill="#6d8095"/><rect x="575.4" y="869.6" width="14.2" height="4.4" fill="#3fd2f5"/><rect x="575.4" y="875.6" width="3.8" height="2.9" fill="#f3f6f8"/><rect x="580.4" y="875.6" width="3.8" height="2.9" fill="#f3f6f8"/><rect x="585.4" y="875.6" width="3.8" height="2.9" fill="#f3f6f8"/><rect x="575.4" y="879.5" width="3.8" height="2.9" fill="#f3f6f8"/><rect x="580.4" y="879.5" width="3.8" height="2.9" fill="#f3f6f8"/><rect x="575.4" y="883.4" width="3.8" height="2.9" fill="#f3f6f8"/><rect x="580.4" y="883.4" width="3.8" height="2.9" fill="#f3f6f8"/><rect x="575.4" y="887.3" width="3.8" height="2.9" fill="#f3f6f8"/><rect x="580.4" y="887.3" width="3.8" height="2.9" fill="#f3f6f8"/><rect x="585.4" y="879.5" width="4.2" height="10.7" fill="#0f4a8a"/><defs><radialGradient id="ffg" cx="60%" cy="20%" r="90%"><stop offset="0" stop-color="#ffde3d"/><stop offset="0.45" stop-color="#ff8a16"/><stop offset="0.8" stop-color="#ff3d4f"/><stop offset="1" stop-color="#d9249a"/></radialGradient></defs><circle cx="635" cy="879.6" r="11.8" fill="url(#ffg)"/><path d="M639.4 866.6Q645 870 646.6 876Q645 872.8 642.8 872Q641.8 868.8 639.4 866.6Z" fill="#ffbd2e"/><path d="M624.2 872.4Q625 869.4 627.4 868.6Q627 871 628.6 872.4Z" fill="#ff8a16"/><circle cx="636.4" cy="879.6" r="5.2" fill="#6a3fd0"/><path d="M630.4 877.6Q634 874.6 638.6 876.2Q635.4 877.4 636 879.4Q632.6 880.4 630.4 877.6Z" fill="#ff9a1e"/><path d="M678.4 867.3H698.1V887L693.8 891.3H678.4Z" fill="#5a3fa6"/><path d="M693.8 891.3V887H698.1Z" fill="#a996dc"/><path d="M680.4 868.4L692.2 880.6L689.4 883.2L678.6 871Z" fill="#e9e6f4"/><path d="M689 879.4L692.6 876.6L695.4 880L691.4 883.4Z" fill="#f5a623"/><rect x="673.8" y="882.2" width="12.2" height="5" fill="#f0b41c"/><text x="679.9" y="886.5" font-family="Liberation Sans" font-size="4.6" font-weight="bold" fill="#2a1a00" text-anchor="middle">DjVu</text><rect x="665.9" y="897.6" width="34.1" height="2.4" fill="#0a78d4"/><rect x="700" y="897.6" width="7.9" height="2.4" fill="#7ab6ea"/><rect x="726.3" y="867.3" width="24.3" height="24" rx="1.4" fill="#bfe0f8" stroke="#8db7d8" stroke-width="0.8"/><g><rect x="728.4" y="867.8" width="1.6" height="5.4" fill="#e84a4a"/><rect x="730" y="867.8" width="1.6" height="5.4" fill="#f2c230"/><rect x="731.6" y="867.8" width="1.6" height="5.4" fill="#52b848"/><rect x="733.2" y="867.8" width="1.6" height="5.4" fill="#8a55c8"/></g><path d="M729 879Q737.6 871.6 747.4 878.6Q738 885.6 729 879Z" fill="#f6fbff" stroke="#2a6fb4" stroke-width="1"/><circle cx="738" cy="878.6" r="3.2" fill="#2a8ad8"/><circle cx="738" cy="878.6" r="1.4" fill="#0f2f5a"/><rect x="735.3" y="882.3" width="15" height="7.4" fill="#e8432c"/><text x="742.8" y="888.6" font-family="Liberation Sans" font-size="6.6" font-weight="bold" fill="#ffffff" text-anchor="middle">PDF</text><rect x="717.4" y="897.6" width="42.2" height="2.4" fill="#0a78d4"/><path d="M781.6 869.4L784.6 871.4Q787.4 869.6 790.2 871L792.4 868.2L793.2 872.6Q794.6 875 793.4 877.6L799.6 876.4Q801.8 874 803.4 876.8Q803.2 879.6 799.6 880.2L795.4 881.8L798 884.6Q801.4 884 801.6 887Q799.8 889.6 796.4 888.4L791.6 884.8L788.2 890.4Q785 892 783.4 889.4Q783.6 886.8 786 885.6L786.6 881.2Q781.4 881.4 778.4 878.8Q777.8 876 780.6 875.6L784 877.2Q781.4 874 781.6 869.4Z" fill="#a31313" stroke="#7a0c0c" stroke-width="0.6"/><circle cx="785.6" cy="874.6" r="1" fill="#f6dcdc"/><circle cx="789.8" cy="874" r="1" fill="#f6dcdc"/><rect x="769" y="897.6" width="42.6" height="2.4" fill="#0a78d4"/><rect x="816.8" y="858" width="50.6" height="42" fill="#f4efea"/><rect x="829" y="867" width="24.8" height="24.6" fill="#1d2a33"/><rect x="829.7" y="867.7" width="23.4" height="23.2" fill="none" stroke="#19b5e6" stroke-width="1.4"/><circle cx="841.4" cy="879.3" r="8.6" fill="none" stroke="#19b5e6" stroke-width="1.6"/><path d="M838.2 873.6V885.2M845 873.8L838.6 879.3L848.2 887.4" fill="none" stroke="#19b5e6" stroke-width="1.8"/><rect x="816.8" y="897.6" width="50.6" height="2.4" fill="#0a78d4"/><path d="M881.2 880.6Q881.6 874.2 890 870.8Q897.4 868.4 903.6 871.6Q906.8 874 904.6 877.4Q901 882.8 893 886.6Q886 889.4 882.6 886.4Q880.8 884.2 881.2 880.6Z" fill="#1a5fe0"/><ellipse cx="894.6" cy="882.2" rx="6.2" ry="2.6" transform="rotate(-22 894.6 882.2)" fill="#ffffff"/><rect x="872.5" y="897.6" width="42.2" height="2.4" fill="#0a78d4"/><path d="M1342 882.6L1348.4 876.2L1354.8 882.6" fill="none" stroke="#2a2a2a" stroke-width="1.4"/><rect x="1367.6" y="876" width="13.4" height="6.8" fill="#222"/><rect x="1381" y="877.8" width="1.2" height="3.2" fill="#222"/><path d="M1365.4 875.2H1368.6V878.6H1365.4Z" fill="#f4efe6" stroke="#222" stroke-width="0.9"/><path d="M1366.2 875V873.6M1367.8 875V873.6" stroke="#222" stroke-width="0.7"/><g fill="none" stroke="#2a2a2a" stroke-width="1.1"><rect x="1394" y="872.8" width="12.6" height="9.6"/><path d="M1400.4 882.4V885.4M1396.6 885.6H1404.2"/><rect x="1391" y="873" width="2.6" height="3.4" fill="#f0e8d8" stroke-width="0.9"/><path d="M1392.3 876.4V883.6H1394" stroke-width="0.8"/></g><g fill="none" stroke="#2a2a2a" stroke-width="1.1"><path d="M1415.4 876.6H1417.8L1420.8 873.6V884.2L1417.8 881.2H1415.4Z"/><path d="M1423.4 876.8Q1424.8 878.9 1423.4 881M1426 874.8Q1428.6 878.9 1426 883M1428.6 872.8Q1432.4 878.9 1428.6 885"/></g><path d="M1557.8 871.2H1573.8V884.2H1563.6L1560.4 887.4V884.2H1557.8Z" fill="#111"/><path d="M1560.4 874.8H1571.4M1560.4 877.6H1571.4M1560.4 880.4H1571.4" stroke="#8a8476" stroke-width="1"/><circle cx="1573.8" cy="887.2" r="7.8" fill="#cfcfcf" stroke="#8e8e8e" stroke-width="1"/><rect x="1595.6" y="858" width="1" height="42" fill="#a8a098"/></svg>
<div class="t" style="left:1443.9px;top:873.14px;font-size:12px;line-height:12px;color:#1f1f1f;letter-spacing:-1.144px;">РУС</div>
<div class="t" style="left:1497.9px;top:863.54px;font-size:12px;line-height:12px;color:#1f1f1f;letter-spacing:-0.365px;">9:26</div>
<div class="t" style="left:1481.0px;top:882.64px;font-size:12px;line-height:12px;color:#1f1f1f;letter-spacing:-0.316px;">18.02.2026</div>
<div class="t" style="left:1570.6px;top:881.44px;font-size:12px;line-height:12px;color:#111;">7</div>
</body></html>
